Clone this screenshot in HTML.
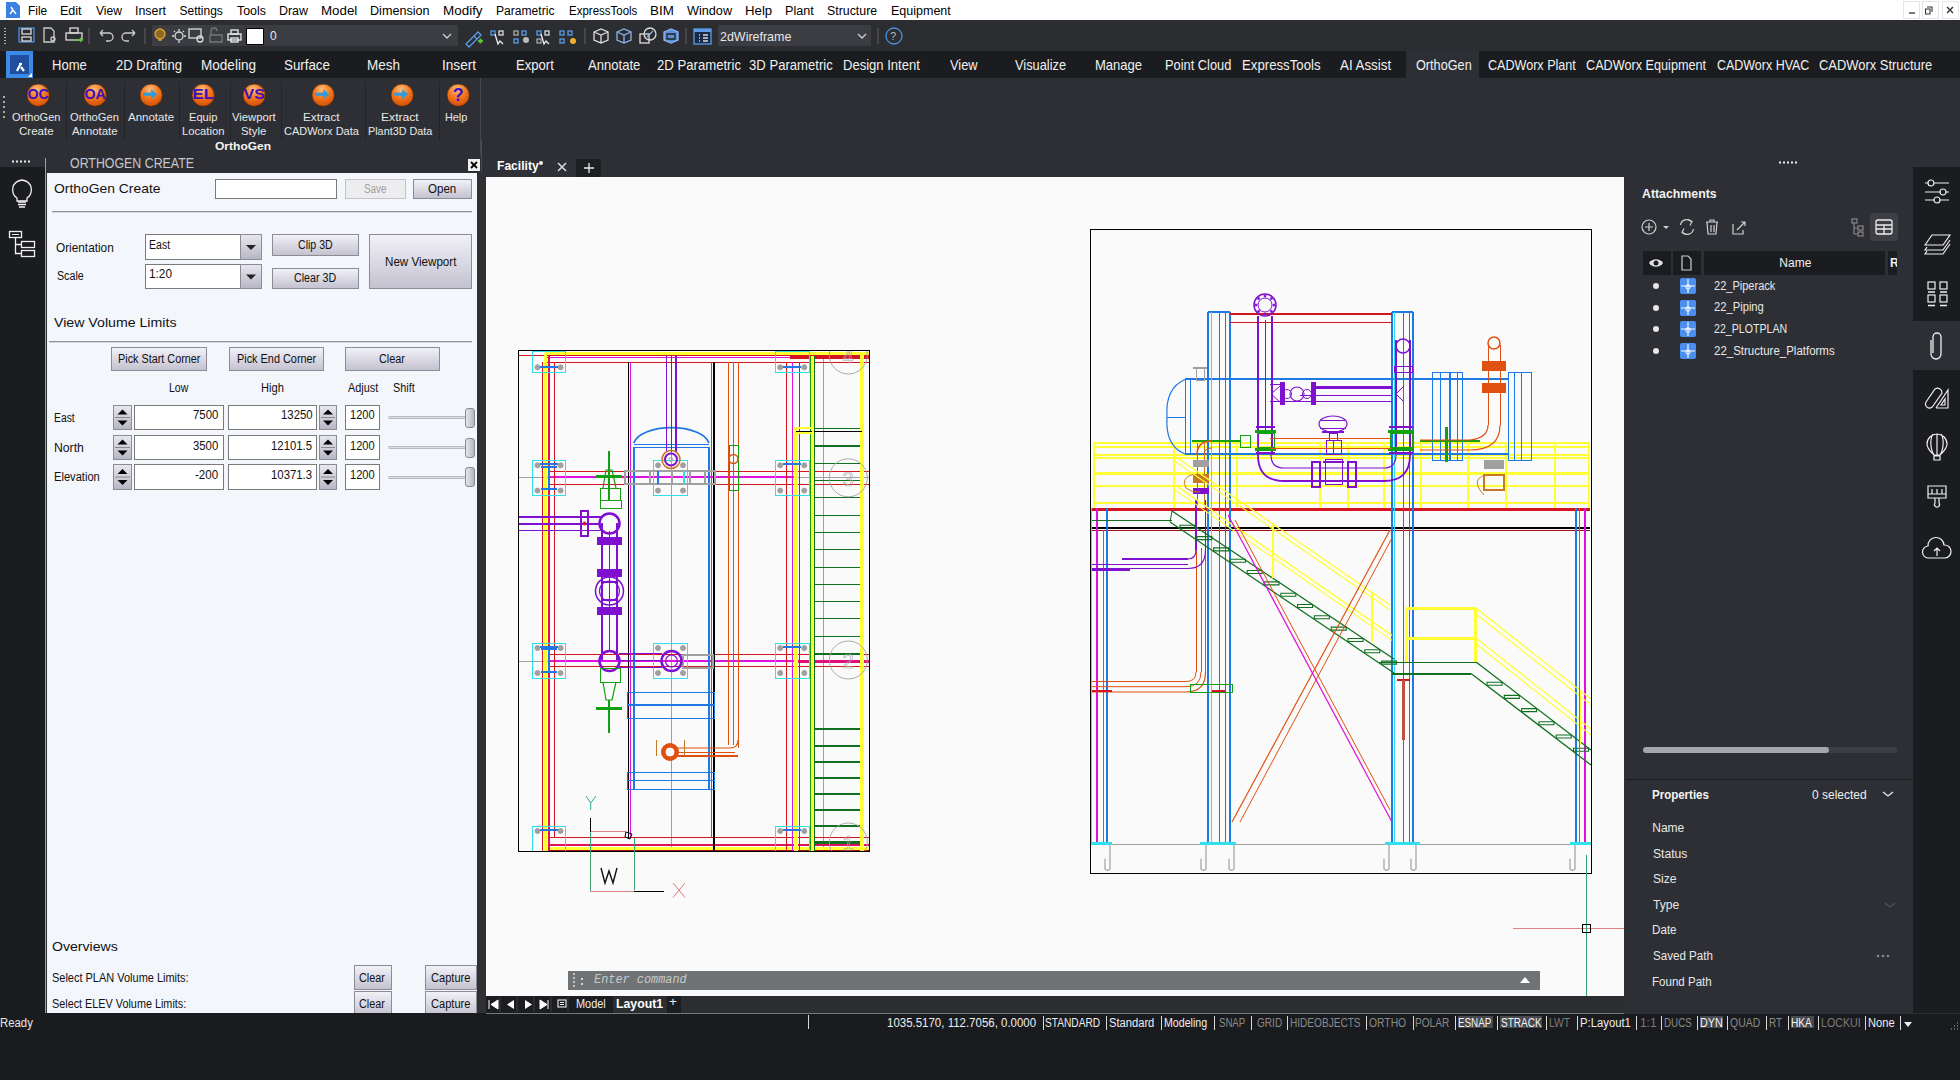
<!DOCTYPE html>
<html><head><meta charset="utf-8"><style>
html,body{margin:0;padding:0;width:1960px;height:1080px;overflow:hidden;background:#2d2f34;font-family:"Liberation Sans",sans-serif}
.b{position:absolute}
.t{position:absolute;white-space:nowrap;line-height:1.15}
.btn{position:absolute;box-sizing:border-box;border:1px solid #8c8c96;background:linear-gradient(#f2f1f8,#c4c2d0);text-align:center;font-family:"Liberation Sans",sans-serif;white-space:nowrap}
.btn.dis{background:#ededef;border-color:#c4c4c8}
.inp{position:absolute;box-sizing:border-box;border:1px solid #7a7a7a;background:#fff;font-size:12px;color:#111;white-space:nowrap}
.spin{position:absolute;box-sizing:border-box;border:1px solid #8c8c96;background:linear-gradient(#e8e7ef,#b8b6c4)}
.thumb{position:absolute;box-sizing:border-box;border:1px solid #8a8a92;border-radius:3px;background:linear-gradient(90deg,#e6e6ee,#b6b6c2)}
</style></head><body>
<div class="b" style="left:0px;top:0px;width:1960px;height:20px;background:#ffffff;"></div>
<div class="t" style="left:28.35px;top:4.84px;font-size:12px;line-height:1;color:#000;font-weight:normal;font-style:normal;transform:scaleX(0.9933);transform-origin:0 0;">File</div>
<div class="t" style="left:60.30px;top:4.84px;font-size:12px;line-height:1;color:#000;font-weight:normal;font-style:normal;transform:scaleX(1.0449);transform-origin:0 0;">Edit</div>
<div class="t" style="left:95.94px;top:4.84px;font-size:12px;line-height:1;color:#000;font-weight:normal;font-style:normal;transform:scaleX(1.0101);transform-origin:0 0;">View</div>
<div class="t" style="left:134.88px;top:4.84px;font-size:12px;line-height:1;color:#000;font-weight:normal;font-style:normal;transform:scaleX(1.0326);transform-origin:0 0;">Insert</div>
<div class="t" style="left:179.46px;top:4.84px;font-size:12px;line-height:1;color:#000;font-weight:normal;font-style:normal;">Settings</div>
<div class="t" style="left:237.25px;top:4.84px;font-size:12px;line-height:1;color:#000;font-weight:normal;font-style:normal;transform:scaleX(1.0344);transform-origin:0 0;">Tools</div>
<div class="t" style="left:279.01px;top:4.84px;font-size:12px;line-height:1;color:#000;font-weight:normal;font-style:normal;transform:scaleX(1.0347);transform-origin:0 0;">Draw</div>
<div class="t" style="left:321.43px;top:4.84px;font-size:12px;line-height:1;color:#000;font-weight:normal;font-style:normal;transform:scaleX(1.1100);transform-origin:0 0;">Model</div>
<div class="t" style="left:369.99px;top:4.84px;font-size:12px;line-height:1;color:#000;font-weight:normal;font-style:normal;transform:scaleX(1.0517);transform-origin:0 0;">Dimension</div>
<div class="t" style="left:443.42px;top:4.84px;font-size:12px;line-height:1;color:#000;font-weight:normal;font-style:normal;transform:scaleX(1.1198);transform-origin:0 0;">Modify</div>
<div class="t" style="left:496.33px;top:4.84px;font-size:12px;line-height:1;color:#000;font-weight:normal;font-style:normal;transform:scaleX(1.0078);transform-origin:0 0;">Parametric</div>
<div class="t" style="left:569.08px;top:4.84px;font-size:12px;line-height:1;color:#000;font-weight:normal;font-style:normal;transform:scaleX(0.9577);transform-origin:0 0;">ExpressTools</div>
<div class="t" style="left:650.33px;top:4.84px;font-size:12px;line-height:1;color:#000;font-weight:normal;font-style:normal;transform:scaleX(1.1146);transform-origin:0 0;">BIM</div>
<div class="t" style="left:686.94px;top:4.84px;font-size:12px;line-height:1;color:#000;font-weight:normal;font-style:normal;transform:scaleX(1.0549);transform-origin:0 0;">Window</div>
<div class="t" style="left:744.94px;top:4.84px;font-size:12px;line-height:1;color:#000;font-weight:normal;font-style:normal;transform:scaleX(1.1025);transform-origin:0 0;">Help</div>
<div class="t" style="left:784.99px;top:4.84px;font-size:12px;line-height:1;color:#000;font-weight:normal;font-style:normal;transform:scaleX(1.0540);transform-origin:0 0;">Plant</div>
<div class="t" style="left:827.44px;top:4.84px;font-size:12px;line-height:1;color:#000;font-weight:normal;font-style:normal;transform:scaleX(1.0298);transform-origin:0 0;">Structure</div>
<div class="t" style="left:891.00px;top:4.84px;font-size:12px;line-height:1;color:#000;font-weight:normal;font-style:normal;transform:scaleX(1.0419);transform-origin:0 0;">Equipment</div>
<svg class="b" style="left:6px;top:2px" width="14" height="16"><path d="M0 0h10l4 4v12H0z" fill="#3b82e0"/><path d="M5 5l2 3M7 8l-3 4M7 8l3 4" stroke="#fff" stroke-width="1.4" fill="none"/></svg>
<div class="b" style="left:1903px;top:1px;width:17px;height:18px;background:#ffffff;border:1px solid #e6e6e6;box-sizing:border-box"></div>
<div class="b" style="left:1922px;top:1px;width:17px;height:18px;background:#ffffff;border:1px solid #e6e6e6;box-sizing:border-box"></div>
<div class="b" style="left:1942px;top:1px;width:17px;height:18px;background:#ffffff;border:1px solid #e6e6e6;box-sizing:border-box"></div>
<svg class="b" style="left:1903px;top:1px" width="57" height="18"><path d="M6 12h6" stroke="#333" stroke-width="1.3"/><path d="M24 6h5v5M22.5 8h4.5v5h-4.5z" stroke="#333" fill="none" stroke-width="1.1"/><path d="M44 6l6 6M50 6l-6 6" stroke="#333" stroke-width="1.4"/></svg>
<div class="b" style="left:0px;top:20px;width:1960px;height:31px;background:#2b2d31;"></div>
<div class="b" style="left:152px;top:25px;width:306px;height:21px;background:#3b3d42;"></div>
<div class="b" style="left:718px;top:25px;width:153px;height:21px;background:#3b3d42;"></div>
<div class="t" style="left:270.22px;top:30.22px;font-size:12.5px;line-height:1;color:#e8e8e8;font-weight:normal;font-style:normal;transform:scaleX(0.9500);transform-origin:0 0;">0</div>
<div class="b" style="left:246px;top:28px;width:18px;height:17px;background:#ffffff;border:1px solid #000;box-sizing:border-box"></div>
<div class="t" style="left:720.38px;top:29.99px;font-size:13px;line-height:1;color:#e8e8e8;font-weight:normal;font-style:normal;transform:scaleX(0.9591);transform-origin:0 0;">2dWireframe</div>
<svg class="b" style="left:440px;top:30px" width="14" height="12"><path d="M3 4l4 4 4-4" stroke="#ccc" fill="none" stroke-width="1.3"/></svg>
<svg class="b" style="left:855px;top:30px" width="14" height="12"><path d="M3 4l4 4 4-4" stroke="#ccc" fill="none" stroke-width="1.3"/></svg>

<svg class="b" style="left:0;top:20px" width="960" height="31" fill="none" stroke-width="1.3">
 <path d="M5 8v1M5 11v1M5 14v1M5 17v1M5 20v1M5 23v1" stroke="#ddd" stroke-width="1.5"/>
 <rect x="19" y="8" width="15" height="14" stroke="#4d8fe0"/><rect x="22" y="9" width="9" height="5" stroke="#ddd"/><rect x="22" y="17" width="9" height="4" stroke="#ddd"/>
 <path d="M44 8h7l3 3v11H44z" stroke="#ccc"/><circle cx="53" cy="19" r="2" stroke="#ccc"/>
 <rect x="66" y="13" width="16" height="7" stroke="#ddd"/><rect x="70" y="8" width="8" height="5" stroke="#ddd"/><path d="M76 20h6M80 18l2 2-2 2" stroke="#5fbf3f"/>
 <path d="M89 8v16" stroke="#555"/>
 <path d="M100 13h9a4 4 0 0 1 0 8h-3M100 13l3-3M100 13l3 3" stroke="#ccc"/>
 <path d="M135 13h-9a4 4 0 0 0 0 8h3M135 13l-3-3M135 13l-3 3" stroke="#ccc"/>
 <path d="M145 8v16" stroke="#555"/>
 <circle cx="160" cy="14" r="5" stroke="#e2a532" fill="#8a6a20"/><path d="M158 20h4" stroke="#e2a532"/>
 <circle cx="179" cy="16" r="4" stroke="#ddd"/><path d="M179 9v2M179 21v2M172 16h2M184 16h2M174 11l1 1M184 11l-1 1" stroke="#ddd"/>
 <rect x="189" y="9" width="12" height="9" stroke="#ddd"/><circle cx="200" cy="19" r="3" stroke="#ddd"/>
 <path d="M211 14v-3a3 3 0 0 1 6 0M210 15h12v7h-12z" stroke="#777"/>
 <rect x="228" y="14" width="13" height="6" stroke="#eee"/><rect x="231" y="10" width="7" height="4" stroke="#eee"/><rect x="231" y="18" width="7" height="4" stroke="#eee"/>
 <path d="M466 24l8-8 3 3-8 8zM474 16l4-4 3 3-4 4" stroke="#5b9be8"/><path d="M478 21h5M480.5 18.5v5" stroke="#5fbf3f" stroke-width="2"/>
 <rect x="491" y="11" width="4" height="4" stroke="#5b9be8"/><rect x="499" y="11" width="4" height="4" stroke="#ddd"/><path d="M495 14l3 10 2-3 3 3" stroke="#eee"/>
 <rect x="514" y="11" width="4" height="4" stroke="#aaa"/><rect x="522" y="11" width="4" height="4" stroke="#5b9be8"/><rect x="514" y="19" width="4" height="4" stroke="#5b9be8"/><circle cx="526" cy="20" r="3" fill="#bbb"/>
 <rect x="537" y="11" width="4" height="4" stroke="#5b9be8"/><rect x="545" y="11" width="4" height="4" stroke="#ddd"/><rect x="537" y="19" width="4" height="4" stroke="#aaa"/><path d="M541 14l3 10 2-3 3 3" stroke="#eee"/>
 <rect x="560" y="11" width="4" height="4" stroke="#5b9be8"/><rect x="568" y="11" width="4" height="4" stroke="#5b9be8"/><rect x="560" y="19" width="4" height="4" stroke="#5b9be8"/><circle cx="573" cy="21" r="3" fill="#f0b030"/>
 <path d="M585 8v16" stroke="#555"/>
 <path d="M594 12l7-3 7 3v8l-7 3-7-3zM594 12l7 3 7-3M601 15v8" stroke="#ddd"/>
 <path d="M617 12l7-3 7 3v8l-7 3-7-3zM617 12l7 3 7-3M624 15v8" stroke="#8ab4f0"/>
 <circle cx="650" cy="14" r="6" stroke="#ddd"/><rect x="640" y="14" width="9" height="9" stroke="#ddd"/><path d="M647 17l6-6" stroke="#8ab4f0"/>
 <path d="M664 12l7-3 7 3v8l-7 3-7-3z" fill="#5b8fd8" stroke="#8ab4f0"/><path d="M667 14h8v5h-8z" stroke="#222"/>
 <path d="M686 8v16" stroke="#555"/>
 <rect x="694" y="9" width="17" height="15" stroke="#5b9be8" fill="#1a2a44"/><rect x="694" y="9" width="17" height="3" fill="#5b9be8"/><path d="M699 15h1M699 18h1M699 21h1M703 15h5M703 18h5M703 21h5" stroke="#ddd"/>
 <path d="M878 8v16" stroke="#555"/>
 <circle cx="894" cy="16" r="8" stroke="#4d8fe0"/><text x="890" y="20" font-size="11" fill="#bbb" stroke="none" font-family="Liberation Sans">?</text>
</svg>
<div class="b" style="left:0px;top:51px;width:1960px;height:27px;background:#1b1c1f;"></div>
<div class="b" style="left:1406px;top:51px;width:73px;height:27px;background:#2d2f34;"></div>
<div class="b" style="left:6px;top:51px;width:27px;height:27px;background:#3a8ae6;"></div>
<div class="b" style="left:10px;top:55px;width:19px;height:19px;background:#1f4f9e;"></div>
<svg class="b" style="left:6px;top:51px" width="27" height="27"><path d="M11 20l4-8M13 13l3 0M15 16l3 4" stroke="#fff" stroke-width="2.2" fill="none"/><path d="M22 26l4-4v4z" fill="#fff"/></svg>
<div class="t" style="left:52.45px;top:57.89px;font-size:14.3px;line-height:1;color:#f0f0f0;font-weight:normal;font-style:normal;transform:scaleX(0.9140);transform-origin:0 0;">Home</div>
<div class="t" style="left:115.65px;top:57.89px;font-size:14.3px;line-height:1;color:#f0f0f0;font-weight:normal;font-style:normal;transform:scaleX(0.9131);transform-origin:0 0;">2D Drafting</div>
<div class="t" style="left:200.92px;top:57.89px;font-size:14.3px;line-height:1;color:#f0f0f0;font-weight:normal;font-style:normal;transform:scaleX(0.9479);transform-origin:0 0;">Modeling</div>
<div class="t" style="left:283.70px;top:57.89px;font-size:14.3px;line-height:1;color:#f0f0f0;font-weight:normal;font-style:normal;transform:scaleX(0.9317);transform-origin:0 0;">Surface</div>
<div class="t" style="left:366.92px;top:57.89px;font-size:14.3px;line-height:1;color:#f0f0f0;font-weight:normal;font-style:normal;transform:scaleX(0.9425);transform-origin:0 0;">Mesh</div>
<div class="t" style="left:441.78px;top:57.89px;font-size:14.3px;line-height:1;color:#f0f0f0;font-weight:normal;font-style:normal;transform:scaleX(0.9508);transform-origin:0 0;">Insert</div>
<div class="t" style="left:516.25px;top:57.89px;font-size:14.3px;line-height:1;color:#f0f0f0;font-weight:normal;font-style:normal;transform:scaleX(0.9166);transform-origin:0 0;">Export</div>
<div class="t" style="left:588.00px;top:57.89px;font-size:14.3px;line-height:1;color:#f0f0f0;font-weight:normal;font-style:normal;transform:scaleX(0.9141);transform-origin:0 0;">Annotate</div>
<div class="t" style="left:656.64px;top:57.89px;font-size:14.3px;line-height:1;color:#f0f0f0;font-weight:normal;font-style:normal;transform:scaleX(0.9191);transform-origin:0 0;">2D Parametric</div>
<div class="t" style="left:749.48px;top:57.89px;font-size:14.3px;line-height:1;color:#f0f0f0;font-weight:normal;font-style:normal;transform:scaleX(0.9166);transform-origin:0 0;">3D Parametric</div>
<div class="t" style="left:843.26px;top:57.89px;font-size:14.3px;line-height:1;color:#f0f0f0;font-weight:normal;font-style:normal;transform:scaleX(0.9119);transform-origin:0 0;">Design Intent</div>
<div class="t" style="left:950.14px;top:57.89px;font-size:14.3px;line-height:1;color:#f0f0f0;font-weight:normal;font-style:normal;transform:scaleX(0.8998);transform-origin:0 0;">View</div>
<div class="t" style="left:1015.24px;top:57.89px;font-size:14.3px;line-height:1;color:#f0f0f0;font-weight:normal;font-style:normal;transform:scaleX(0.8975);transform-origin:0 0;">Visualize</div>
<div class="t" style="left:1094.96px;top:57.89px;font-size:14.3px;line-height:1;color:#f0f0f0;font-weight:normal;font-style:normal;transform:scaleX(0.9117);transform-origin:0 0;">Manage</div>
<div class="t" style="left:1165.27px;top:57.89px;font-size:14.3px;line-height:1;color:#f0f0f0;font-weight:normal;font-style:normal;transform:scaleX(0.8976);transform-origin:0 0;">Point Cloud</div>
<div class="t" style="left:1241.94px;top:57.89px;font-size:14.3px;line-height:1;color:#f0f0f0;font-weight:normal;font-style:normal;transform:scaleX(0.9236);transform-origin:0 0;">ExpressTools</div>
<div class="t" style="left:1340.00px;top:57.89px;font-size:14.3px;line-height:1;color:#f0f0f0;font-weight:normal;font-style:normal;transform:scaleX(0.9324);transform-origin:0 0;">AI Assist</div>
<div class="t" style="left:1415.73px;top:57.89px;font-size:14.3px;line-height:1;color:#f0f0f0;font-weight:normal;font-style:normal;transform:scaleX(0.8872);transform-origin:0 0;">OrthoGen</div>
<div class="t" style="left:1487.97px;top:57.89px;font-size:14.3px;line-height:1;color:#f0f0f0;font-weight:normal;font-style:normal;transform:scaleX(0.8796);transform-origin:0 0;">CADWorx Plant</div>
<div class="t" style="left:1585.67px;top:57.89px;font-size:14.3px;line-height:1;color:#f0f0f0;font-weight:normal;font-style:normal;transform:scaleX(0.8859);transform-origin:0 0;">CADWorx Equipment</div>
<div class="t" style="left:1717.08px;top:57.89px;font-size:14.3px;line-height:1;color:#f0f0f0;font-weight:normal;font-style:normal;transform:scaleX(0.8722);transform-origin:0 0;">CADWorx HVAC</div>
<div class="t" style="left:1818.75px;top:57.89px;font-size:14.3px;line-height:1;color:#f0f0f0;font-weight:normal;font-style:normal;transform:scaleX(0.9039);transform-origin:0 0;">CADWorx Structure</div>
<div class="b" style="left:0px;top:78px;width:1960px;height:99px;background:#2d2f34;"></div>
<div class="b" style="left:66px;top:82px;width:1px;height:58px;background:#232427;"></div>
<div class="b" style="left:124px;top:82px;width:1px;height:58px;background:#232427;"></div>
<div class="b" style="left:179px;top:82px;width:1px;height:58px;background:#232427;"></div>
<div class="b" style="left:230px;top:82px;width:1px;height:58px;background:#232427;"></div>
<div class="b" style="left:281px;top:82px;width:1px;height:58px;background:#232427;"></div>
<div class="b" style="left:365px;top:82px;width:1px;height:58px;background:#232427;"></div>
<div class="b" style="left:439px;top:82px;width:1px;height:58px;background:#232427;"></div>
<div class="b" style="left:480px;top:78px;width:1px;height:77px;background:#45474b;"></div>
<svg class="b" style="left:2px;top:96px" width="4" height="40"><path d="M2 0v2M2 5v2M2 10v2M2 15v2M2 20v2" stroke="#ddd" stroke-width="1.4"/></svg>
<svg class="b" style="left:25.8px;top:83.3px" width="24.4" height="24.4"><defs><radialGradient id="g38" cx="0.45" cy="0.25" r="0.8"><stop offset="0" stop-color="#fbc080"/><stop offset="0.45" stop-color="#f47a20"/><stop offset="1" stop-color="#d04800"/></radialGradient></defs><circle cx="12.2" cy="12.2" r="11.2" fill="url(#g38)" stroke="#3a2010" stroke-width="0.6"/><text x="12.2" y="16.2" text-anchor="middle" font-size="15" font-weight="bold" fill="#3a10c0" font-family="Liberation Sans" textLength="21.4" lengthAdjust="spacingAndGlyphs">OC</text></svg>
<div class="t" style="left:12.30px;top:111.48px;font-size:11.6px;line-height:1;color:#e8e8e8;font-weight:normal;font-style:normal;transform:scaleX(0.9507);transform-origin:0 0;">OrthoGen</div>
<div class="t" style="left:19.22px;top:125.18px;font-size:11.6px;line-height:1;color:#e8e8e8;font-weight:normal;font-style:normal;transform:scaleX(0.9941);transform-origin:0 0;">Create</div>
<svg class="b" style="left:82.8px;top:83.3px" width="24.4" height="24.4"><defs><radialGradient id="g95" cx="0.45" cy="0.25" r="0.8"><stop offset="0" stop-color="#fbc080"/><stop offset="0.45" stop-color="#f47a20"/><stop offset="1" stop-color="#d04800"/></radialGradient></defs><circle cx="12.2" cy="12.2" r="11.2" fill="url(#g95)" stroke="#3a2010" stroke-width="0.6"/><text x="12.2" y="16.2" text-anchor="middle" font-size="15" font-weight="bold" fill="#3a10c0" font-family="Liberation Sans" textLength="21.4" lengthAdjust="spacingAndGlyphs">OA</text></svg>
<div class="t" style="left:70.30px;top:111.48px;font-size:11.6px;line-height:1;color:#e8e8e8;font-weight:normal;font-style:normal;transform:scaleX(0.9587);transform-origin:0 0;">OrthoGen</div>
<div class="t" style="left:72.00px;top:125.18px;font-size:11.6px;line-height:1;color:#e8e8e8;font-weight:normal;font-style:normal;transform:scaleX(0.9809);transform-origin:0 0;">Annotate</div>
<svg class="b" style="left:138.8px;top:83.3px" width="24.4" height="24.4"><defs><radialGradient id="g151" cx="0.45" cy="0.25" r="0.8"><stop offset="0" stop-color="#fbc080"/><stop offset="0.45" stop-color="#f47a20"/><stop offset="1" stop-color="#d04800"/></radialGradient></defs><circle cx="12.2" cy="12.2" r="11.2" fill="url(#g151)" stroke="#3a2010" stroke-width="0.6"/><path d="M4.199999999999999 9.7h8v-3.5l6 5-6 5v-3.5h-8z" fill="#2f9ae0"/></svg>
<div class="t" style="left:128.00px;top:111.48px;font-size:11.6px;line-height:1;color:#e8e8e8;font-weight:normal;font-style:normal;transform:scaleX(0.9918);transform-origin:0 0;">Annotate</div>
<svg class="b" style="left:190.8px;top:83.3px" width="24.4" height="24.4"><defs><radialGradient id="g203" cx="0.45" cy="0.25" r="0.8"><stop offset="0" stop-color="#fbc080"/><stop offset="0.45" stop-color="#f47a20"/><stop offset="1" stop-color="#d04800"/></radialGradient></defs><circle cx="12.2" cy="12.2" r="11.2" fill="url(#g203)" stroke="#3a2010" stroke-width="0.6"/><text x="12.2" y="16.2" text-anchor="middle" font-size="15" font-weight="bold" fill="#3a10c0" font-family="Liberation Sans" textLength="21.4" lengthAdjust="spacingAndGlyphs">EL</text></svg>
<div class="t" style="left:188.51px;top:111.48px;font-size:11.6px;line-height:1;color:#e8e8e8;font-weight:normal;font-style:normal;transform:scaleX(0.9594);transform-origin:0 0;">Equip</div>
<div class="t" style="left:181.50px;top:125.18px;font-size:11.6px;line-height:1;color:#e8e8e8;font-weight:normal;font-style:normal;transform:scaleX(0.9676);transform-origin:0 0;">Location</div>
<svg class="b" style="left:241.8px;top:83.3px" width="24.4" height="24.4"><defs><radialGradient id="g254" cx="0.45" cy="0.25" r="0.8"><stop offset="0" stop-color="#fbc080"/><stop offset="0.45" stop-color="#f47a20"/><stop offset="1" stop-color="#d04800"/></radialGradient></defs><circle cx="12.2" cy="12.2" r="11.2" fill="url(#g254)" stroke="#3a2010" stroke-width="0.6"/><text x="12.2" y="16.2" text-anchor="middle" font-size="15" font-weight="bold" fill="#3a10c0" font-family="Liberation Sans" textLength="21.4" lengthAdjust="spacingAndGlyphs">VS</text></svg>
<div class="t" style="left:232.34px;top:111.48px;font-size:11.6px;line-height:1;color:#e8e8e8;font-weight:normal;font-style:normal;transform:scaleX(0.9693);transform-origin:0 0;">Viewport</div>
<div class="t" style="left:241.29px;top:125.18px;font-size:11.6px;line-height:1;color:#e8e8e8;font-weight:normal;font-style:normal;transform:scaleX(0.9794);transform-origin:0 0;">Style</div>
<svg class="b" style="left:310.8px;top:83.3px" width="24.4" height="24.4"><defs><radialGradient id="g323" cx="0.45" cy="0.25" r="0.8"><stop offset="0" stop-color="#fbc080"/><stop offset="0.45" stop-color="#f47a20"/><stop offset="1" stop-color="#d04800"/></radialGradient></defs><circle cx="12.2" cy="12.2" r="11.2" fill="url(#g323)" stroke="#3a2010" stroke-width="0.6"/><path d="M4.199999999999999 9.7h8v-3.5l6 5-6 5v-3.5h-8z" fill="#2f9ae0"/></svg>
<div class="t" style="left:303.36px;top:111.48px;font-size:11.6px;line-height:1;color:#e8e8e8;font-weight:normal;font-style:normal;transform:scaleX(1.0117);transform-origin:0 0;">Extract</div>
<div class="t" style="left:284.15px;top:125.18px;font-size:11.6px;line-height:1;color:#e8e8e8;font-weight:normal;font-style:normal;transform:scaleX(0.9468);transform-origin:0 0;">CADWorx Data</div>
<svg class="b" style="left:389.8px;top:83.3px" width="24.4" height="24.4"><defs><radialGradient id="g402" cx="0.45" cy="0.25" r="0.8"><stop offset="0" stop-color="#fbc080"/><stop offset="0.45" stop-color="#f47a20"/><stop offset="1" stop-color="#d04800"/></radialGradient></defs><circle cx="12.2" cy="12.2" r="11.2" fill="url(#g402)" stroke="#3a2010" stroke-width="0.6"/><path d="M4.199999999999999 9.7h8v-3.5l6 5-6 5v-3.5h-8z" fill="#2f9ae0"/></svg>
<div class="t" style="left:381.33px;top:111.48px;font-size:11.6px;line-height:1;color:#e8e8e8;font-weight:normal;font-style:normal;transform:scaleX(1.0459);transform-origin:0 0;">Extract</div>
<div class="t" style="left:367.63px;top:125.18px;font-size:11.6px;line-height:1;color:#e8e8e8;font-weight:normal;font-style:normal;transform:scaleX(0.9334);transform-origin:0 0;">Plant3D Data</div>
<svg class="b" style="left:445.8px;top:83.3px" width="24.4" height="24.4"><defs><radialGradient id="g458" cx="0.45" cy="0.25" r="0.8"><stop offset="0" stop-color="#fbc080"/><stop offset="0.45" stop-color="#f47a20"/><stop offset="1" stop-color="#d04800"/></radialGradient></defs><circle cx="12.2" cy="12.2" r="11.2" fill="url(#g458)" stroke="#3a2010" stroke-width="0.6"/><text x="12.2" y="18.2" text-anchor="middle" font-size="18" font-weight="bold" fill="#3a10c0" font-family="Liberation Sans">?</text></svg>
<div class="t" style="left:445.33px;top:111.48px;font-size:11.6px;line-height:1;color:#e8e8e8;font-weight:normal;font-style:normal;transform:scaleX(0.9356);transform-origin:0 0;">Help</div>
<div class="t" style="left:215.32px;top:141.43px;font-size:11.3px;line-height:1;color:#f4f4f4;font-weight:bold;font-style:normal;transform:scaleX(1.0643);transform-origin:0 0;">OrthoGen</div>
<div class="b" style="left:0px;top:155px;width:480px;height:22px;background:#2d2f34;"></div>
<svg class="b" style="left:12px;top:160px" width="20" height="4"><path d="M0 1.5h2M4 1.5h2M8 1.5h2M12 1.5h2M16 1.5h2" stroke="#eee" stroke-width="2"/></svg>
<div class="b" style="left:45px;top:158px;width:1px;height:855px;background:#9c9ea2;"></div>
<div class="t" style="left:70.34px;top:157.32px;font-size:13.8px;line-height:1;color:#c4c8cc;font-weight:normal;font-style:normal;transform:scaleX(0.8971);transform-origin:0 0;">ORTHOGEN CREATE</div>
<div class="b" style="left:468px;top:159px;width:12px;height:12px;background:#f0f0f0;"></div>
<svg class="b" style="left:468px;top:159px" width="12" height="12"><path d="M3 3l6 6M9 3l-6 6" stroke="#000" stroke-width="1.8"/></svg>
<div class="b" style="left:481px;top:140px;width:1px;height:32px;background:#4a4c50;"></div>
<div class="b" style="left:487px;top:159px;width:88px;height:18px;background:#2f3136;"></div>
<div class="t" style="left:496.81px;top:160.42px;font-size:12.5px;line-height:1;color:#ffffff;font-weight:bold;font-style:normal;transform:scaleX(0.9671);transform-origin:0 0;">Facility</div>
<svg class="b" style="left:538px;top:160px" width="6" height="6"><circle cx="3" cy="3" r="2" fill="#eee"/></svg>
<svg class="b" style="left:556px;top:161px" width="12" height="12"><path d="M2 2l8 8M10 2l-8 8" stroke="#ddd" stroke-width="1.5"/></svg>
<div class="b" style="left:576px;top:159px;width:25px;height:18px;background:#1e1f22;"></div>
<svg class="b" style="left:582px;top:161px" width="14" height="14"><path d="M7 2v10M2 7h10" stroke="#eee" stroke-width="1.3"/></svg>
<div class="b" style="left:0px;top:167px;width:45px;height:846px;background:#1b1c1f;"></div>
<svg class="b" style="left:0px;top:170px" width="45" height="100" fill="none" stroke="#f0f0f0" stroke-width="1.3"><path d="M17 28c-6-4-7-16 5-18 12 2 11 14 5 18v3h-10z"/><path d="M18 32h8M18 34.5h8M19 37h6"/><rect x="9.5" y="61.5" width="12" height="6"/><rect x="21.5" y="71.5" width="13" height="6"/><rect x="21.5" y="80.5" width="13" height="6"/><path d="M15.5 67.5v16h6M15.5 74.5h6"/><path d="M12 64.5h7" stroke-width="1"/></svg>
<div class="b" style="left:47px;top:173px;width:430px;height:840px;background:#f3f6fb;"></div>
<div class="b" style="left:477px;top:173px;width:9px;height:840px;background:#2e3034;"></div>
<div class="t" style="left:53.77px;top:183.16px;font-size:12.8px;line-height:1;color:#111;font-weight:normal;font-style:normal;transform:scaleX(1.0853);transform-origin:0 0;">OrthoGen Create</div>
<div class="inp" style="left:215px;top:179px;width:122px;height:20px"></div>
<div class="btn dis" style="left:345px;top:179px;width:61px;height:20px"></div>
<div class="t" style="left:363.55px;top:182.84px;font-size:12px;line-height:1;color:#a0a0a0;font-weight:normal;font-style:normal;transform:scaleX(0.8257);transform-origin:0 0;">Save</div>
<div class="btn" style="left:413px;top:179px;width:59px;height:20px"></div>
<div class="t" style="left:428.48px;top:182.84px;font-size:12px;line-height:1;color:#111;font-weight:normal;font-style:normal;transform:scaleX(0.9636);transform-origin:0 0;">Open</div>
<div class="b" style="left:52px;top:211px;width:420px;height:1px;background:#8e9298;"></div>
<div class="b" style="left:52px;top:212px;width:420px;height:1px;background:#d6d9de;"></div>
<div class="t" style="left:56.47px;top:241.64px;font-size:12px;line-height:1;color:#111;font-weight:normal;font-style:normal;transform:scaleX(0.9833);transform-origin:0 0;">Orientation</div>
<div class="t" style="left:56.52px;top:269.54px;font-size:12px;line-height:1;color:#111;font-weight:normal;font-style:normal;transform:scaleX(0.8887);transform-origin:0 0;">Scale</div>
<div class="inp" style="left:145px;top:234px;width:117px;height:26px"></div>
<div class="spin" style="left:240px;top:234px;width:22px;height:26px"></div>
<svg class="b" style="left:240px;top:234px" width="22" height="26"><path d="M6 11.0h10l-5 5z" fill="#222"/></svg>
<div class="t" style="left:149.16px;top:238.64px;font-size:12px;line-height:1;color:#111;font-weight:normal;font-style:normal;transform:scaleX(0.8790);transform-origin:0 0;">East</div>
<div class="inp" style="left:145px;top:264px;width:117px;height:25px"></div>
<div class="spin" style="left:240px;top:264px;width:22px;height:25px"></div>
<svg class="b" style="left:240px;top:264px" width="22" height="25"><path d="M6 10.5h10l-5 5z" fill="#222"/></svg>
<div class="t" style="left:149.11px;top:267.54px;font-size:12px;line-height:1;color:#111;font-weight:normal;font-style:normal;transform:scaleX(0.9855);transform-origin:0 0;">1:20</div>
<div class="btn" style="left:272px;top:234px;width:87px;height:22px"></div>
<div class="t" style="left:298.17px;top:238.64px;font-size:12px;line-height:1;color:#111;font-weight:normal;font-style:normal;transform:scaleX(0.8831);transform-origin:0 0;">Clip 3D</div>
<div class="btn" style="left:272px;top:268px;width:87px;height:21px"></div>
<div class="t" style="left:294.37px;top:271.84px;font-size:12px;line-height:1;color:#111;font-weight:normal;font-style:normal;transform:scaleX(0.8896);transform-origin:0 0;">Clear 3D</div>
<div class="btn" style="left:369px;top:234px;width:103px;height:55px"></div>
<div class="t" style="left:384.87px;top:255.54px;font-size:12px;line-height:1;color:#111;font-weight:normal;font-style:normal;transform:scaleX(0.9673);transform-origin:0 0;">New Viewport</div>
<div class="t" style="left:54.23px;top:316.96px;font-size:12.8px;line-height:1;color:#111;font-weight:normal;font-style:normal;transform:scaleX(1.1061);transform-origin:0 0;">View Volume Limits</div>
<div class="b" style="left:49px;top:341px;width:423px;height:1px;background:#8e9298;"></div>
<div class="b" style="left:49px;top:342px;width:423px;height:1px;background:#d6d9de;"></div>
<div class="btn" style="left:111px;top:347px;width:96px;height:24px"></div>
<div class="t" style="left:117.73px;top:352.84px;font-size:12px;line-height:1;color:#111;font-weight:normal;font-style:normal;transform:scaleX(0.9026);transform-origin:0 0;">Pick Start Corner</div>
<div class="btn" style="left:229px;top:347px;width:95px;height:24px"></div>
<div class="t" style="left:236.93px;top:352.84px;font-size:12px;line-height:1;color:#111;font-weight:normal;font-style:normal;transform:scaleX(0.9070);transform-origin:0 0;">Pick End Corner</div>
<div class="btn" style="left:345px;top:347px;width:95px;height:24px"></div>
<div class="t" style="left:379.16px;top:352.84px;font-size:12px;line-height:1;color:#111;font-weight:normal;font-style:normal;transform:scaleX(0.9052);transform-origin:0 0;">Clear</div>
<div class="t" style="left:168.86px;top:382.44px;font-size:12px;line-height:1;color:#111;font-weight:normal;font-style:normal;transform:scaleX(0.8784);transform-origin:0 0;">Low</div>
<div class="t" style="left:260.91px;top:382.44px;font-size:12px;line-height:1;color:#111;font-weight:normal;font-style:normal;transform:scaleX(0.9250);transform-origin:0 0;">High</div>
<div class="t" style="left:347.70px;top:382.44px;font-size:12px;line-height:1;color:#111;font-weight:normal;font-style:normal;transform:scaleX(0.9055);transform-origin:0 0;">Adjust</div>
<div class="t" style="left:392.81px;top:382.44px;font-size:12px;line-height:1;color:#111;font-weight:normal;font-style:normal;transform:scaleX(0.9017);transform-origin:0 0;">Shift</div>
<div class="t" style="left:54.07px;top:411.84px;font-size:12px;line-height:1;color:#111;font-weight:normal;font-style:normal;transform:scaleX(0.8616);transform-origin:0 0;">East</div>
<div class="spin" style="left:113px;top:405px;width:19px;height:25px"></div><svg class="b" style="left:113px;top:405px" width="19" height="25"><path d="M4.5 9.5l5-5 5 5z" fill="#000"/><path d="M4.5 15.5l5 5 5-5z" fill="#000"/><path d="M2 12.5h15" stroke="#888"/></svg>
<div class="inp" style="left:134px;top:405px;width:90px;height:25px"></div>
<div class="t" style="left:193.23px;top:409.44px;font-size:12px;line-height:1;color:#111;font-weight:normal;font-style:normal;transform:scaleX(0.9502);transform-origin:0 0;">7500</div>
<div class="inp" style="left:228px;top:405px;width:89px;height:25px"></div>
<div class="t" style="left:280.65px;top:409.44px;font-size:12px;line-height:1;color:#111;font-weight:normal;font-style:normal;transform:scaleX(0.9488);transform-origin:0 0;">13250</div>
<div class="spin" style="left:319px;top:405px;width:18px;height:25px"></div><svg class="b" style="left:319px;top:405px" width="18" height="25"><path d="M4.0 9.5l5-5 5 5z" fill="#000"/><path d="M4.0 15.5l5 5 5-5z" fill="#000"/><path d="M2 12.5h14" stroke="#888"/></svg>
<div class="inp" style="left:345px;top:405px;width:35px;height:25px"></div>
<div class="t" style="left:350.27px;top:409.44px;font-size:12px;line-height:1;color:#111;font-weight:normal;font-style:normal;transform:scaleX(0.9220);transform-origin:0 0;">1200</div>
<div class="b" style="left:388px;top:416.0px;width:80px;height:3px;background:#dcdee2;border-radius:2px;border:1px solid #b8bac0;box-sizing:border-box"></div>
<div class="thumb" style="left:465px;top:408px;width:10px;height:20px"></div>
<div class="t" style="left:53.92px;top:441.84px;font-size:12px;line-height:1;color:#111;font-weight:normal;font-style:normal;transform:scaleX(1.0181);transform-origin:0 0;">North</div>
<div class="spin" style="left:113px;top:435px;width:19px;height:25px"></div><svg class="b" style="left:113px;top:435px" width="19" height="25"><path d="M4.5 9.5l5-5 5 5z" fill="#000"/><path d="M4.5 15.5l5 5 5-5z" fill="#000"/><path d="M2 12.5h15" stroke="#888"/></svg>
<div class="inp" style="left:134px;top:435px;width:90px;height:25px"></div>
<div class="t" style="left:193.35px;top:439.64px;font-size:12px;line-height:1;color:#111;font-weight:normal;font-style:normal;transform:scaleX(0.9457);transform-origin:0 0;">3500</div>
<div class="inp" style="left:228px;top:435px;width:89px;height:25px"></div>
<div class="t" style="left:271.25px;top:439.64px;font-size:12px;line-height:1;color:#111;font-weight:normal;font-style:normal;transform:scaleX(0.9476);transform-origin:0 0;">12101.5</div>
<div class="spin" style="left:319px;top:435px;width:18px;height:25px"></div><svg class="b" style="left:319px;top:435px" width="18" height="25"><path d="M4.0 9.5l5-5 5 5z" fill="#000"/><path d="M4.0 15.5l5 5 5-5z" fill="#000"/><path d="M2 12.5h14" stroke="#888"/></svg>
<div class="inp" style="left:345px;top:435px;width:35px;height:25px"></div>
<div class="t" style="left:350.27px;top:439.64px;font-size:12px;line-height:1;color:#111;font-weight:normal;font-style:normal;transform:scaleX(0.9220);transform-origin:0 0;">1200</div>
<div class="b" style="left:388px;top:446.0px;width:80px;height:3px;background:#dcdee2;border-radius:2px;border:1px solid #b8bac0;box-sizing:border-box"></div>
<div class="thumb" style="left:465px;top:438px;width:10px;height:20px"></div>
<div class="t" style="left:54.01px;top:471.34px;font-size:12px;line-height:1;color:#111;font-weight:normal;font-style:normal;transform:scaleX(0.9278);transform-origin:0 0;">Elevation</div>
<div class="spin" style="left:113px;top:464px;width:19px;height:26px"></div><svg class="b" style="left:113px;top:464px" width="19" height="26"><path d="M4.5 10.0l5-5 5 5z" fill="#000"/><path d="M4.5 16.0l5 5 5-5z" fill="#000"/><path d="M2 13.0h15" stroke="#888"/></svg>
<div class="inp" style="left:134px;top:464px;width:90px;height:26px"></div>
<div class="t" style="left:195.48px;top:468.84px;font-size:12px;line-height:1;color:#111;font-weight:normal;font-style:normal;transform:scaleX(0.9635);transform-origin:0 0;">-200</div>
<div class="inp" style="left:228px;top:464px;width:89px;height:26px"></div>
<div class="t" style="left:271.25px;top:468.84px;font-size:12px;line-height:1;color:#111;font-weight:normal;font-style:normal;transform:scaleX(0.9476);transform-origin:0 0;">10371.3</div>
<div class="spin" style="left:319px;top:464px;width:18px;height:26px"></div><svg class="b" style="left:319px;top:464px" width="18" height="26"><path d="M4.0 10.0l5-5 5 5z" fill="#000"/><path d="M4.0 16.0l5 5 5-5z" fill="#000"/><path d="M2 13.0h14" stroke="#888"/></svg>
<div class="inp" style="left:345px;top:464px;width:35px;height:26px"></div>
<div class="t" style="left:350.27px;top:468.84px;font-size:12px;line-height:1;color:#111;font-weight:normal;font-style:normal;transform:scaleX(0.9220);transform-origin:0 0;">1200</div>
<div class="b" style="left:388px;top:475.5px;width:80px;height:3px;background:#dcdee2;border-radius:2px;border:1px solid #b8bac0;box-sizing:border-box"></div>
<div class="thumb" style="left:465px;top:467px;width:10px;height:20px"></div>
<div class="t" style="left:51.77px;top:940.66px;font-size:12.8px;line-height:1;color:#111;font-weight:normal;font-style:normal;transform:scaleX(1.1012);transform-origin:0 0;">Overviews</div>
<div class="t" style="left:51.51px;top:972.24px;font-size:12px;line-height:1;color:#111;font-weight:normal;font-style:normal;transform:scaleX(0.9146);transform-origin:0 0;">Select PLAN Volume Limits:</div>
<div class="t" style="left:51.51px;top:997.64px;font-size:12px;line-height:1;color:#111;font-weight:normal;font-style:normal;transform:scaleX(0.9024);transform-origin:0 0;">Select ELEV Volume Limits:</div>
<div class="btn" style="left:354px;top:965px;width:38px;height:25px"></div>
<div class="t" style="left:358.96px;top:972.24px;font-size:12px;line-height:1;color:#111;font-weight:normal;font-style:normal;transform:scaleX(0.8980);transform-origin:0 0;">Clear</div>
<div class="btn" style="left:425px;top:965px;width:52px;height:25px"></div>
<div class="t" style="left:431.45px;top:972.24px;font-size:12px;line-height:1;color:#111;font-weight:normal;font-style:normal;transform:scaleX(0.9224);transform-origin:0 0;">Capture</div>
<div class="btn" style="left:354px;top:991px;width:38px;height:25px"></div>
<div class="t" style="left:358.96px;top:997.64px;font-size:12px;line-height:1;color:#111;font-weight:normal;font-style:normal;transform:scaleX(0.8980);transform-origin:0 0;">Clear</div>
<div class="btn" style="left:425px;top:991px;width:52px;height:25px"></div>
<div class="t" style="left:431.45px;top:997.64px;font-size:12px;line-height:1;color:#111;font-weight:normal;font-style:normal;transform:scaleX(0.9224);transform-origin:0 0;">Capture</div>
<div class="b" style="left:486px;top:177px;width:1138px;height:819px;background:#fafafa;"></div>
<svg class="b" style="left:0;top:0" width="1960" height="1080"><line x1="518" y1="477.5" x2="870" y2="477.5" stroke="#a0a0a0" stroke-width="1" shape-rendering="crispEdges"/><line x1="518" y1="661.5" x2="870" y2="661.5" stroke="#a0a0a0" stroke-width="1" shape-rendering="crispEdges"/><line x1="671.5" y1="447" x2="671.5" y2="851" stroke="#a0a0a0" stroke-width="1" shape-rendering="crispEdges"/><line x1="823.5" y1="356" x2="823.5" y2="851" stroke="#a0a0a0" stroke-width="1" shape-rendering="crispEdges"/><line x1="545" y1="353.5" x2="869" y2="353.5" stroke="#ffff33" stroke-width="3" shape-rendering="crispEdges"/><line x1="518" y1="355.5" x2="869" y2="355.5" stroke="#d4141e" stroke-width="1" shape-rendering="crispEdges"/><line x1="545" y1="357.5" x2="869" y2="357.5" stroke="#e010e0" stroke-width="1" shape-rendering="crispEdges"/><line x1="545" y1="362.5" x2="869" y2="362.5" stroke="#d4141e" stroke-width="1" shape-rendering="crispEdges"/><line x1="790" y1="357.5" x2="869" y2="357.5" stroke="#d4141e" stroke-width="3" shape-rendering="crispEdges"/><line x1="549" y1="837.5" x2="869" y2="837.5" stroke="#d4141e" stroke-width="1" shape-rendering="crispEdges"/><line x1="545" y1="848.5" x2="869" y2="848.5" stroke="#ffff33" stroke-width="3" shape-rendering="crispEdges"/><line x1="549" y1="845" x2="869" y2="845" stroke="#e01060" stroke-width="2" shape-rendering="crispEdges"/><line x1="549" y1="851" x2="869" y2="851" stroke="#a0101a" stroke-width="2" shape-rendering="crispEdges"/><line x1="548" y1="471.5" x2="869" y2="471.5" stroke="#d4141e" stroke-width="1" shape-rendering="crispEdges"/><line x1="548" y1="484.5" x2="869" y2="484.5" stroke="#d4141e" stroke-width="1" shape-rendering="crispEdges"/><line x1="548" y1="477" x2="795" y2="477" stroke="#e010e0" stroke-width="2" shape-rendering="crispEdges"/><line x1="548" y1="654.5" x2="869" y2="654.5" stroke="#d4141e" stroke-width="1" shape-rendering="crispEdges"/><line x1="548" y1="666.5" x2="869" y2="666.5" stroke="#d4141e" stroke-width="1" shape-rendering="crispEdges"/><line x1="548" y1="661" x2="869" y2="661" stroke="#e010e0" stroke-width="2" shape-rendering="crispEdges"/><line x1="795" y1="661.5" x2="869" y2="661.5" stroke="#e0107a" stroke-width="3" shape-rendering="crispEdges"/><line x1="542.5" y1="362" x2="542.5" y2="851" stroke="#d4141e" stroke-width="1" shape-rendering="crispEdges"/><line x1="545.5" y1="353" x2="545.5" y2="851" stroke="#ffff33" stroke-width="3" shape-rendering="crispEdges"/><line x1="549" y1="356" x2="549" y2="851" stroke="#e01060" stroke-width="2" shape-rendering="crispEdges"/><line x1="554.5" y1="362" x2="554.5" y2="838" stroke="#d4141e" stroke-width="1" shape-rendering="crispEdges"/><line x1="786.5" y1="362" x2="786.5" y2="851" stroke="#d4141e" stroke-width="1" shape-rendering="crispEdges"/><line x1="792.5" y1="362" x2="792.5" y2="851" stroke="#e010e0" stroke-width="1" shape-rendering="crispEdges"/><line x1="799.5" y1="362" x2="799.5" y2="851" stroke="#d4141e" stroke-width="1" shape-rendering="crispEdges"/><line x1="796" y1="429" x2="796" y2="851" stroke="#ffff33" stroke-width="4" shape-rendering="crispEdges"/><rect x="532.5" y="351.5" width="33.0" height="21.0" stroke="#30e0f0" stroke-width="1" fill="none" shape-rendering="crispEdges"/><circle cx="537.5" cy="367.3" r="2.5" stroke="#a0a0a0" stroke-width="1" fill="#a0a0a0"/><circle cx="560.6" cy="367.3" r="2.5" stroke="#a0a0a0" stroke-width="1" fill="#a0a0a0"/><line x1="540" y1="367" x2="558" y2="367" stroke="#1e78e6" stroke-width="2" shape-rendering="crispEdges"/><rect x="532.5" y="460.5" width="33.0" height="35.0" stroke="#30e0f0" stroke-width="1" fill="none" shape-rendering="crispEdges"/><circle cx="537.5" cy="465.3" r="2.5" stroke="#a0a0a0" stroke-width="1" fill="#a0a0a0"/><circle cx="537.5" cy="490.6" r="2.5" stroke="#a0a0a0" stroke-width="1" fill="#a0a0a0"/><circle cx="560.6" cy="465.3" r="2.5" stroke="#a0a0a0" stroke-width="1" fill="#a0a0a0"/><circle cx="560.6" cy="490.6" r="2.5" stroke="#a0a0a0" stroke-width="1" fill="#a0a0a0"/><line x1="540" y1="464" x2="558" y2="464" stroke="#1e78e6" stroke-width="2" shape-rendering="crispEdges"/><rect x="532.5" y="643.5" width="33.0" height="35.0" stroke="#30e0f0" stroke-width="1" fill="none" shape-rendering="crispEdges"/><circle cx="537.5" cy="648" r="2.5" stroke="#a0a0a0" stroke-width="1" fill="#a0a0a0"/><circle cx="537.5" cy="673" r="2.5" stroke="#a0a0a0" stroke-width="1" fill="#a0a0a0"/><circle cx="560.6" cy="648" r="2.5" stroke="#a0a0a0" stroke-width="1" fill="#a0a0a0"/><circle cx="560.6" cy="673" r="2.5" stroke="#a0a0a0" stroke-width="1" fill="#a0a0a0"/><line x1="540" y1="647" x2="558" y2="647" stroke="#1e78e6" stroke-width="2" shape-rendering="crispEdges"/><rect x="532.5" y="826.5" width="33.0" height="25.0" stroke="#30e0f0" stroke-width="1" fill="none" shape-rendering="crispEdges"/><circle cx="537.5" cy="831" r="2.5" stroke="#a0a0a0" stroke-width="1" fill="#a0a0a0"/><circle cx="560.6" cy="831" r="2.5" stroke="#a0a0a0" stroke-width="1" fill="#a0a0a0"/><line x1="540" y1="830" x2="558" y2="830" stroke="#1e78e6" stroke-width="2" shape-rendering="crispEdges"/><rect x="775.5" y="351.5" width="34.0" height="21.0" stroke="#30e0f0" stroke-width="1" fill="none" shape-rendering="crispEdges"/><circle cx="780.2" cy="367.3" r="2.5" stroke="#a0a0a0" stroke-width="1" fill="#a0a0a0"/><circle cx="804.3" cy="367.3" r="2.5" stroke="#a0a0a0" stroke-width="1" fill="#a0a0a0"/><line x1="783" y1="367" x2="801" y2="367" stroke="#1e78e6" stroke-width="2" shape-rendering="crispEdges"/><rect x="775.5" y="460.5" width="34.0" height="35.0" stroke="#30e0f0" stroke-width="1" fill="none" shape-rendering="crispEdges"/><circle cx="780.2" cy="465.3" r="2.5" stroke="#a0a0a0" stroke-width="1" fill="#a0a0a0"/><circle cx="780.2" cy="490.6" r="2.5" stroke="#a0a0a0" stroke-width="1" fill="#a0a0a0"/><circle cx="804.3" cy="465.3" r="2.5" stroke="#a0a0a0" stroke-width="1" fill="#a0a0a0"/><circle cx="804.3" cy="490.6" r="2.5" stroke="#a0a0a0" stroke-width="1" fill="#a0a0a0"/><line x1="783" y1="464" x2="801" y2="464" stroke="#1e78e6" stroke-width="2" shape-rendering="crispEdges"/><rect x="775.5" y="643.5" width="34.0" height="35.0" stroke="#30e0f0" stroke-width="1" fill="none" shape-rendering="crispEdges"/><circle cx="780.2" cy="648" r="2.5" stroke="#a0a0a0" stroke-width="1" fill="#a0a0a0"/><circle cx="780.2" cy="673" r="2.5" stroke="#a0a0a0" stroke-width="1" fill="#a0a0a0"/><circle cx="804.3" cy="648" r="2.5" stroke="#a0a0a0" stroke-width="1" fill="#a0a0a0"/><circle cx="804.3" cy="673" r="2.5" stroke="#a0a0a0" stroke-width="1" fill="#a0a0a0"/><line x1="783" y1="647" x2="801" y2="647" stroke="#1e78e6" stroke-width="2" shape-rendering="crispEdges"/><rect x="775.5" y="826.5" width="34.0" height="25.0" stroke="#30e0f0" stroke-width="1" fill="none" shape-rendering="crispEdges"/><circle cx="780.2" cy="831" r="2.5" stroke="#a0a0a0" stroke-width="1" fill="#a0a0a0"/><circle cx="804.3" cy="831" r="2.5" stroke="#a0a0a0" stroke-width="1" fill="#a0a0a0"/><line x1="783" y1="830" x2="801" y2="830" stroke="#1e78e6" stroke-width="2" shape-rendering="crispEdges"/><rect x="653.5" y="460.5" width="34.0" height="35.0" stroke="#30e0f0" stroke-width="1" fill="none" shape-rendering="crispEdges"/><circle cx="658" cy="465.3" r="2.5" stroke="#a0a0a0" stroke-width="1" fill="#a0a0a0"/><circle cx="658" cy="490.6" r="2.5" stroke="#a0a0a0" stroke-width="1" fill="#a0a0a0"/><circle cx="683" cy="465.3" r="2.5" stroke="#a0a0a0" stroke-width="1" fill="#a0a0a0"/><circle cx="683" cy="490.6" r="2.5" stroke="#a0a0a0" stroke-width="1" fill="#a0a0a0"/><rect x="653.5" y="643.5" width="34.0" height="35.0" stroke="#30e0f0" stroke-width="1" fill="none" shape-rendering="crispEdges"/><circle cx="658" cy="648" r="2.5" stroke="#a0a0a0" stroke-width="1" fill="#a0a0a0"/><circle cx="658" cy="673" r="2.5" stroke="#a0a0a0" stroke-width="1" fill="#a0a0a0"/><circle cx="683" cy="648" r="2.5" stroke="#a0a0a0" stroke-width="1" fill="#a0a0a0"/><circle cx="683" cy="673" r="2.5" stroke="#a0a0a0" stroke-width="1" fill="#a0a0a0"/><line x1="549" y1="466" x2="549" y2="489" stroke="#1e78e6" stroke-width="2" shape-rendering="crispEdges"/><line x1="549" y1="649" x2="549" y2="672" stroke="#1e78e6" stroke-width="2" shape-rendering="crispEdges"/><line x1="541" y1="467" x2="557" y2="467" stroke="#1e78e6" stroke-width="2" shape-rendering="crispEdges"/><line x1="541" y1="489" x2="557" y2="489" stroke="#1e78e6" stroke-width="2" shape-rendering="crispEdges"/><line x1="541" y1="649" x2="557" y2="649" stroke="#1e78e6" stroke-width="2" shape-rendering="crispEdges"/><line x1="541" y1="672" x2="557" y2="672" stroke="#1e78e6" stroke-width="2" shape-rendering="crispEdges"/><line x1="628.5" y1="362" x2="628.5" y2="838" stroke="#000" stroke-width="1" shape-rendering="crispEdges"/><line x1="630.5" y1="362" x2="630.5" y2="838" stroke="#e010e0" stroke-width="1" shape-rendering="crispEdges"/><line x1="634" y1="447" x2="634" y2="789" stroke="#1e78e6" stroke-width="2" shape-rendering="crispEdges"/><line x1="709" y1="447" x2="709" y2="789" stroke="#1e78e6" stroke-width="2" shape-rendering="crispEdges"/><line x1="711.5" y1="362" x2="711.5" y2="838" stroke="#e010e0" stroke-width="1" shape-rendering="crispEdges"/><line x1="714" y1="362" x2="714" y2="851" stroke="#000" stroke-width="2" shape-rendering="crispEdges"/><path d="M633.8 443 A38 18 0 0 1 709 443" stroke="#1e78e6" stroke-width="1.8" fill="none"/><line x1="634" y1="444.5" x2="709" y2="444.5" stroke="#1e78e6" stroke-width="1" shape-rendering="crispEdges"/><line x1="634" y1="447.5" x2="709" y2="447.5" stroke="#1e78e6" stroke-width="1" shape-rendering="crispEdges"/><rect x="627.5" y="692.5" width="87.0" height="26.0" stroke="#1e78e6" stroke-width="1" fill="none" shape-rendering="crispEdges"/><line x1="627" y1="705" x2="714" y2="705" stroke="#1e78e6" stroke-width="2" shape-rendering="crispEdges"/><rect x="627.5" y="772.5" width="87.0" height="17.0" stroke="#1e78e6" stroke-width="1" fill="none" shape-rendering="crispEdges"/><line x1="627" y1="780.5" x2="714" y2="780.5" stroke="#1e78e6" stroke-width="1" shape-rendering="crispEdges"/><rect x="625" y="471" width="90" height="13" stroke="#a0a0a0" stroke-width="2" fill="none" shape-rendering="crispEdges"/><line x1="650" y1="471" x2="650" y2="484" stroke="#a0a0a0" stroke-width="2" shape-rendering="crispEdges"/><line x1="672" y1="471" x2="672" y2="484" stroke="#a0a0a0" stroke-width="2" shape-rendering="crispEdges"/><line x1="690" y1="471" x2="690" y2="484" stroke="#a0a0a0" stroke-width="2" shape-rendering="crispEdges"/><line x1="705" y1="471" x2="705" y2="484" stroke="#a0a0a0" stroke-width="2" shape-rendering="crispEdges"/><line x1="658" y1="471" x2="658" y2="484" stroke="#1e78e6" stroke-width="2" shape-rendering="crispEdges"/><line x1="684" y1="471" x2="684" y2="484" stroke="#30e0f0" stroke-width="2" shape-rendering="crispEdges"/><rect x="683" y="655" width="30" height="13" stroke="#a0a0a0" stroke-width="2" fill="none" shape-rendering="crispEdges"/><line x1="666.5" y1="356" x2="666.5" y2="452" stroke="#8010d0" stroke-width="1" shape-rendering="crispEdges"/><line x1="671.5" y1="356" x2="671.5" y2="452" stroke="#8010d0" stroke-width="1" shape-rendering="crispEdges"/><line x1="676" y1="356" x2="676" y2="452" stroke="#8010d0" stroke-width="2" shape-rendering="crispEdges"/><circle cx="671" cy="459.5" r="9" stroke="#c87820" stroke-width="1.5" fill="none"/><circle cx="671" cy="459.5" r="6" stroke="#8010d0" stroke-width="2" fill="none"/><circle cx="671" cy="459.5" r="2" stroke="#a0a0a0" stroke-width="1" fill="none"/><line x1="728.5" y1="362" x2="728.5" y2="745" stroke="#e05010" stroke-width="1" shape-rendering="crispEdges"/><line x1="733.5" y1="362" x2="733.5" y2="745" stroke="#e05010" stroke-width="1" shape-rendering="crispEdges"/><line x1="738.5" y1="362" x2="738.5" y2="748" stroke="#e05010" stroke-width="1" shape-rendering="crispEdges"/><rect x="729.5" y="445.5" width="9.0" height="45.0" stroke="#10a010" stroke-width="1" fill="none" shape-rendering="crispEdges"/><circle cx="733.5" cy="459" r="4.5" stroke="#e05010" stroke-width="1.5" fill="none"/><path d="M670 748 H730 Q738 748 738 740" stroke="#e05010" stroke-width="1.2" fill="none"/><line x1="670" y1="752.5" x2="735" y2="752.5" stroke="#e05010" stroke-width="1" shape-rendering="crispEdges"/><line x1="670" y1="756" x2="738" y2="756" stroke="#e05010" stroke-width="2" shape-rendering="crispEdges"/><circle cx="670" cy="752" r="8" stroke="#e05010" stroke-width="2" fill="#e05010"/><circle cx="670" cy="752" r="4" stroke="#fff" stroke-width="1" fill="#f7f7f7"/><line x1="656.5" y1="740" x2="656.5" y2="756" stroke="#c87820" stroke-width="1" shape-rendering="crispEdges"/><line x1="684.5" y1="740" x2="684.5" y2="756" stroke="#c87820" stroke-width="1" shape-rendering="crispEdges"/><line x1="518" y1="517" x2="602" y2="517" stroke="#8010d0" stroke-width="2" shape-rendering="crispEdges"/><line x1="518" y1="524" x2="600" y2="524" stroke="#8010d0" stroke-width="2" shape-rendering="crispEdges"/><line x1="518" y1="530.5" x2="602" y2="530.5" stroke="#8010d0" stroke-width="1" shape-rendering="crispEdges"/><rect x="581" y="511" width="7" height="25" stroke="#8010d0" stroke-width="2" fill="none" shape-rendering="crispEdges"/><circle cx="584.5" cy="523.5" r="1.5" stroke="#d4141e" stroke-width="1" fill="#d4141e"/><line x1="602" y1="523" x2="602" y2="660" stroke="#8010d0" stroke-width="2" shape-rendering="crispEdges"/><line x1="617" y1="523" x2="617" y2="660" stroke="#8010d0" stroke-width="2" shape-rendering="crispEdges"/><line x1="609.5" y1="531" x2="609.5" y2="652" stroke="#8010d0" stroke-width="1" shape-rendering="crispEdges"/><circle cx="609.5" cy="523.5" r="10" stroke="#8010d0" stroke-width="2.5" fill="none"/><circle cx="609.5" cy="661" r="10" stroke="#8010d0" stroke-width="2.5" fill="none"/><rect x="598" y="538" width="23" height="6" stroke="#8010d0" stroke-width="2" fill="#8010d0" shape-rendering="crispEdges"/><rect x="598" y="570" width="23" height="6" stroke="#8010d0" stroke-width="2" fill="#8010d0" shape-rendering="crispEdges"/><rect x="598" y="608" width="23" height="6" stroke="#8010d0" stroke-width="2" fill="#8010d0" shape-rendering="crispEdges"/><circle cx="609.5" cy="591" r="14" stroke="#8010d0" stroke-width="1.5" fill="none"/><circle cx="609.5" cy="591" r="10" stroke="#8010d0" stroke-width="1.2" fill="none"/><rect x="602" y="582" width="15" height="18" stroke="#8010d0" stroke-width="2" fill="none" shape-rendering="crispEdges"/><line x1="609" y1="451" x2="609" y2="500" stroke="#10a010" stroke-width="2" shape-rendering="crispEdges"/><line x1="596" y1="476.5" x2="622" y2="476.5" stroke="#10a010" stroke-width="3" shape-rendering="crispEdges"/><rect x="600.5" y="488.5" width="20.0" height="12.0" stroke="#10a010" stroke-width="1" fill="none" shape-rendering="crispEdges"/><rect x="600.5" y="500.5" width="21.0" height="8.0" stroke="#10a010" stroke-width="1" fill="none" shape-rendering="crispEdges"/><path d="M603 488 L606 470 H612 L616 488" stroke="#10a010" stroke-width="1.2" fill="none"/><rect x="600.5" y="668.5" width="20.0" height="14.0" stroke="#10a010" stroke-width="1" fill="none" shape-rendering="crispEdges"/><path d="M603 682 L606 700 H612 L616 682" stroke="#10a010" stroke-width="1.2" fill="none"/><line x1="609" y1="700" x2="609" y2="733" stroke="#10a010" stroke-width="2" shape-rendering="crispEdges"/><line x1="596" y1="708.5" x2="622" y2="708.5" stroke="#10a010" stroke-width="3" shape-rendering="crispEdges"/><line x1="619" y1="653.5" x2="662" y2="653.5" stroke="#8010d0" stroke-width="1" shape-rendering="crispEdges"/><line x1="619" y1="667.5" x2="662" y2="667.5" stroke="#8010d0" stroke-width="1" shape-rendering="crispEdges"/><line x1="619" y1="660.5" x2="662" y2="660.5" stroke="#8010d0" stroke-width="1" shape-rendering="crispEdges"/><circle cx="671.5" cy="661" r="10" stroke="#8010d0" stroke-width="2.5" fill="none"/><circle cx="671.5" cy="661" r="6" stroke="#8010d0" stroke-width="1.2" fill="none"/><line x1="812.5" y1="356" x2="812.5" y2="851" stroke="#ffff33" stroke-width="3" shape-rendering="crispEdges"/><line x1="810.5" y1="356" x2="810.5" y2="851" stroke="#10a010" stroke-width="1" shape-rendering="crispEdges"/><line x1="814.5" y1="356" x2="814.5" y2="851" stroke="#107020" stroke-width="1" shape-rendering="crispEdges"/><line x1="862" y1="353" x2="862" y2="851" stroke="#ffff33" stroke-width="4" shape-rendering="crispEdges"/><line x1="795" y1="431.5" x2="862" y2="431.5" stroke="#000" stroke-width="1" shape-rendering="crispEdges"/><rect x="795" y="428" width="18" height="5" stroke="#ffff33" stroke-width="2" fill="none" shape-rendering="crispEdges"/><line x1="814" y1="428.5" x2="860" y2="428.5" stroke="#107020" stroke-width="1" shape-rendering="crispEdges"/><line x1="814" y1="446" x2="860" y2="446" stroke="#107020" stroke-width="2" shape-rendering="crispEdges"/><line x1="814" y1="463.5" x2="860" y2="463.5" stroke="#107020" stroke-width="1" shape-rendering="crispEdges"/><line x1="814" y1="480.5" x2="860" y2="480.5" stroke="#107020" stroke-width="1" shape-rendering="crispEdges"/><line x1="814" y1="497.5" x2="860" y2="497.5" stroke="#107020" stroke-width="1" shape-rendering="crispEdges"/><line x1="814" y1="515.5" x2="860" y2="515.5" stroke="#107020" stroke-width="1" shape-rendering="crispEdges"/><line x1="814" y1="532.5" x2="860" y2="532.5" stroke="#107020" stroke-width="1" shape-rendering="crispEdges"/><line x1="814" y1="549.5" x2="860" y2="549.5" stroke="#107020" stroke-width="1" shape-rendering="crispEdges"/><line x1="814" y1="567.5" x2="860" y2="567.5" stroke="#107020" stroke-width="1" shape-rendering="crispEdges"/><line x1="814" y1="584.5" x2="860" y2="584.5" stroke="#107020" stroke-width="1" shape-rendering="crispEdges"/><line x1="814" y1="601.5" x2="860" y2="601.5" stroke="#107020" stroke-width="1" shape-rendering="crispEdges"/><line x1="814" y1="618.5" x2="860" y2="618.5" stroke="#107020" stroke-width="1" shape-rendering="crispEdges"/><line x1="814" y1="636.5" x2="860" y2="636.5" stroke="#107020" stroke-width="1" shape-rendering="crispEdges"/><line x1="814" y1="654" x2="860" y2="654" stroke="#107020" stroke-width="2" shape-rendering="crispEdges"/><line x1="814" y1="729" x2="860" y2="729" stroke="#107020" stroke-width="2" shape-rendering="crispEdges"/><line x1="814" y1="746" x2="860" y2="746" stroke="#107020" stroke-width="2" shape-rendering="crispEdges"/><line x1="814" y1="762" x2="860" y2="762" stroke="#107020" stroke-width="2" shape-rendering="crispEdges"/><line x1="814" y1="778" x2="860" y2="778" stroke="#107020" stroke-width="2" shape-rendering="crispEdges"/><line x1="814" y1="794" x2="860" y2="794" stroke="#107020" stroke-width="2" shape-rendering="crispEdges"/><line x1="814" y1="810" x2="860" y2="810" stroke="#107020" stroke-width="2" shape-rendering="crispEdges"/><line x1="814" y1="826" x2="860" y2="826" stroke="#107020" stroke-width="2" shape-rendering="crispEdges"/><line x1="814" y1="842.5" x2="860" y2="842.5" stroke="#107020" stroke-width="3" shape-rendering="crispEdges"/><clipPath id="fr1"><rect x="518" y="350" width="352" height="501"/></clipPath><g clip-path="url(#fr1)"><circle cx="848.3" cy="355" r="19" stroke="#a0a0a0" stroke-width="0.9" fill="none"/><text x="848" y="363" text-anchor="middle" font-size="20" fill="none" stroke="#a8a8a8" stroke-width="0.6" font-family="Liberation Sans">4</text><circle cx="848.3" cy="477.8" r="19" stroke="#a0a0a0" stroke-width="0.9" fill="none"/><text x="848" y="485.8" text-anchor="middle" font-size="20" fill="none" stroke="#a8a8a8" stroke-width="0.6" font-family="Liberation Sans">3</text><circle cx="848.3" cy="660" r="19" stroke="#a0a0a0" stroke-width="0.9" fill="none"/><text x="848" y="668" text-anchor="middle" font-size="20" fill="none" stroke="#a8a8a8" stroke-width="0.6" font-family="Liberation Sans">2</text><circle cx="848.3" cy="842" r="19" stroke="#a0a0a0" stroke-width="0.9" fill="none"/><text x="848" y="850" text-anchor="middle" font-size="20" fill="none" stroke="#a8a8a8" stroke-width="0.6" font-family="Liberation Sans">1</text></g><rect x="518.5" y="350.5" width="351.0" height="501.0" stroke="#000" stroke-width="1" fill="none" shape-rendering="crispEdges"/><line x1="590.5" y1="832" x2="590.5" y2="891" stroke="#40a070" stroke-width="1" shape-rendering="crispEdges"/><line x1="634" y1="891.5" x2="664" y2="891.5" stroke="#000" stroke-width="1" shape-rendering="crispEdges"/><line x1="590" y1="831.5" x2="626" y2="831.5" stroke="#e08080" stroke-width="1" shape-rendering="crispEdges"/><line x1="634.5" y1="838" x2="634.5" y2="890" stroke="#40a070" stroke-width="1" shape-rendering="crispEdges"/><line x1="590.5" y1="818" x2="590.5" y2="832" stroke="#000" stroke-width="1" shape-rendering="crispEdges"/><path d="M586 796 L590.7 803 L596 796 M590.7 803 V810" stroke="#30a890" stroke-width="1" fill="none"/><path d="M601 868 L605 883 L609 871 L613 883 L617 868" stroke="#111" stroke-width="1.4" fill="none"/><path d="M673 883 L685 897.5 M685 883 L673 897.5" stroke="#e07878" stroke-width="1" fill="none"/><line x1="590" y1="891.5" x2="634" y2="891.5" stroke="#e08080" stroke-width="1" shape-rendering="crispEdges"/><path d="M626 832 l6 2 l-2 5 l-5-2z" stroke="#000" stroke-width="1" fill="none"/><line x1="1092" y1="844.5" x2="1590" y2="844.5" stroke="#a0a0a0" stroke-width="1" shape-rendering="crispEdges"/><line x1="1092" y1="509.5" x2="1590" y2="509.5" stroke="#d4141e" stroke-width="3" shape-rendering="crispEdges"/><line x1="1092" y1="528" x2="1590" y2="528" stroke="#000" stroke-width="2" shape-rendering="crispEdges"/><line x1="1092" y1="530.5" x2="1590" y2="530.5" stroke="#a0101a" stroke-width="1" shape-rendering="crispEdges"/><line x1="1093" y1="443" x2="1590" y2="443" stroke="#ffff33" stroke-width="2" shape-rendering="crispEdges"/><line x1="1093" y1="447" x2="1590" y2="447" stroke="#ffff33" stroke-width="2" shape-rendering="crispEdges"/><line x1="1093" y1="455" x2="1590" y2="455" stroke="#ffff33" stroke-width="2" shape-rendering="crispEdges"/><line x1="1093" y1="458" x2="1590" y2="458" stroke="#ffff33" stroke-width="2" shape-rendering="crispEdges"/><line x1="1093" y1="486" x2="1590" y2="486" stroke="#ffff33" stroke-width="2" shape-rendering="crispEdges"/><line x1="1093" y1="503" x2="1590" y2="503" stroke="#ffff33" stroke-width="2" shape-rendering="crispEdges"/><line x1="1093" y1="473.5" x2="1590" y2="473.5" stroke="#ffff33" stroke-width="3" shape-rendering="crispEdges"/><line x1="1094" y1="444" x2="1094" y2="508" stroke="#ffff33" stroke-width="2" shape-rendering="crispEdges"/><line x1="1174" y1="444" x2="1174" y2="508" stroke="#ffff33" stroke-width="2" shape-rendering="crispEdges"/><line x1="1237" y1="444" x2="1237" y2="508" stroke="#ffff33" stroke-width="2" shape-rendering="crispEdges"/><line x1="1320" y1="444" x2="1320" y2="508" stroke="#ffff33" stroke-width="2" shape-rendering="crispEdges"/><line x1="1348" y1="444" x2="1348" y2="508" stroke="#ffff33" stroke-width="2" shape-rendering="crispEdges"/><line x1="1384" y1="444" x2="1384" y2="508" stroke="#ffff33" stroke-width="2" shape-rendering="crispEdges"/><line x1="1421" y1="444" x2="1421" y2="508" stroke="#ffff33" stroke-width="2" shape-rendering="crispEdges"/><line x1="1468" y1="444" x2="1468" y2="508" stroke="#ffff33" stroke-width="2" shape-rendering="crispEdges"/><line x1="1506" y1="444" x2="1506" y2="508" stroke="#ffff33" stroke-width="2" shape-rendering="crispEdges"/><line x1="1555" y1="444" x2="1555" y2="508" stroke="#ffff33" stroke-width="2" shape-rendering="crispEdges"/><line x1="1589" y1="444" x2="1589" y2="508" stroke="#ffff33" stroke-width="2" shape-rendering="crispEdges"/><line x1="1185" y1="379" x2="1509" y2="379" stroke="#1e78e6" stroke-width="2" shape-rendering="crispEdges"/><line x1="1185" y1="454" x2="1509" y2="454" stroke="#1e78e6" stroke-width="2" shape-rendering="crispEdges"/><path d="M1185 379.5 Q1165 388 1167 417 Q1165 446 1185 454" stroke="#1e78e6" stroke-width="1.2" fill="none"/><line x1="1167" y1="417.5" x2="1185" y2="417.5" stroke="#1e78e6" stroke-width="1" shape-rendering="crispEdges"/><rect x="1196.5" y="368.5" width="8.0" height="12.0" stroke="#a0a0a0" stroke-width="1" fill="none" shape-rendering="crispEdges"/><line x1="1193" y1="368" x2="1207" y2="368" stroke="#a0a0a0" stroke-width="2" shape-rendering="crispEdges"/><line x1="1185.5" y1="379" x2="1185.5" y2="454" stroke="#1e78e6" stroke-width="1" shape-rendering="crispEdges"/><line x1="1190.5" y1="379" x2="1190.5" y2="454" stroke="#1e78e6" stroke-width="1" shape-rendering="crispEdges"/><rect x="1432.5" y="372.5" width="30.0" height="88.0" stroke="#1e78e6" stroke-width="1" fill="none" shape-rendering="crispEdges"/><line x1="1440.5" y1="373" x2="1440.5" y2="460" stroke="#1e78e6" stroke-width="1" shape-rendering="crispEdges"/><line x1="1450" y1="373" x2="1450" y2="460" stroke="#1e78e6" stroke-width="2" shape-rendering="crispEdges"/><line x1="1457.5" y1="373" x2="1457.5" y2="460" stroke="#1e78e6" stroke-width="1" shape-rendering="crispEdges"/><rect x="1508.5" y="372.5" width="23.0" height="88.0" stroke="#1e78e6" stroke-width="1" fill="none" shape-rendering="crispEdges"/><line x1="1514.5" y1="373" x2="1514.5" y2="460" stroke="#1e78e6" stroke-width="1" shape-rendering="crispEdges"/><line x1="1521.5" y1="373" x2="1521.5" y2="460" stroke="#1e78e6" stroke-width="1" shape-rendering="crispEdges"/><line x1="1208" y1="312" x2="1208" y2="845" stroke="#1e78e6" stroke-width="2" shape-rendering="crispEdges"/><line x1="1230" y1="312" x2="1230" y2="845" stroke="#1e78e6" stroke-width="2" shape-rendering="crispEdges"/><line x1="1219.5" y1="312" x2="1219.5" y2="845" stroke="#e010e0" stroke-width="1" shape-rendering="crispEdges"/><line x1="1225.5" y1="312" x2="1225.5" y2="845" stroke="#e010e0" stroke-width="1" shape-rendering="crispEdges"/><line x1="1208" y1="312" x2="1230" y2="312" stroke="#1e78e6" stroke-width="2" shape-rendering="crispEdges"/><line x1="1211.5" y1="312" x2="1211.5" y2="845" stroke="#30e0f0" stroke-width="1" shape-rendering="crispEdges"/><line x1="1392" y1="312" x2="1392" y2="845" stroke="#1e78e6" stroke-width="2" shape-rendering="crispEdges"/><line x1="1413" y1="312" x2="1413" y2="845" stroke="#1e78e6" stroke-width="2" shape-rendering="crispEdges"/><line x1="1403.5" y1="312" x2="1403.5" y2="845" stroke="#e010e0" stroke-width="1" shape-rendering="crispEdges"/><line x1="1409.5" y1="312" x2="1409.5" y2="845" stroke="#e010e0" stroke-width="1" shape-rendering="crispEdges"/><line x1="1392" y1="312" x2="1413" y2="312" stroke="#1e78e6" stroke-width="2" shape-rendering="crispEdges"/><line x1="1394.5" y1="312" x2="1394.5" y2="845" stroke="#30e0f0" stroke-width="1" shape-rendering="crispEdges"/><line x1="1097" y1="508" x2="1097" y2="845" stroke="#e010e0" stroke-width="2" shape-rendering="crispEdges"/><line x1="1107" y1="508" x2="1107" y2="845" stroke="#1e78e6" stroke-width="2" shape-rendering="crispEdges"/><line x1="1091.5" y1="508" x2="1091.5" y2="845" stroke="#30e0f0" stroke-width="1" shape-rendering="crispEdges"/><line x1="1576" y1="508" x2="1576" y2="845" stroke="#1e78e6" stroke-width="2" shape-rendering="crispEdges"/><line x1="1585" y1="508" x2="1585" y2="845" stroke="#e010e0" stroke-width="2" shape-rendering="crispEdges"/><line x1="1591.5" y1="508" x2="1591.5" y2="845" stroke="#30e0f0" stroke-width="1" shape-rendering="crispEdges"/><line x1="1230" y1="314" x2="1392" y2="314" stroke="#d4141e" stroke-width="2" shape-rendering="crispEdges"/><line x1="1230" y1="322.5" x2="1392" y2="322.5" stroke="#d4141e" stroke-width="1" shape-rendering="crispEdges"/><line x1="1258" y1="316" x2="1258" y2="432" stroke="#8010d0" stroke-width="2" shape-rendering="crispEdges"/><line x1="1272" y1="316" x2="1272" y2="432" stroke="#8010d0" stroke-width="2" shape-rendering="crispEdges"/><line x1="1265.5" y1="320" x2="1265.5" y2="432" stroke="#8010d0" stroke-width="1" shape-rendering="crispEdges"/><circle cx="1265" cy="305" r="11" stroke="#8010d0" stroke-width="1.5" fill="none"/><circle cx="1265" cy="305" r="7" stroke="#8010d0" stroke-width="1" fill="none"/><circle cx="1274.0" cy="305.0" r="1" stroke="#8010d0" stroke-width="1" fill="#8010d0"/><circle cx="1271.4" cy="311.4" r="1" stroke="#8010d0" stroke-width="1" fill="#8010d0"/><circle cx="1265.0" cy="314.0" r="1" stroke="#8010d0" stroke-width="1" fill="#8010d0"/><circle cx="1258.6" cy="311.4" r="1" stroke="#8010d0" stroke-width="1" fill="#8010d0"/><circle cx="1256.0" cy="305.0" r="1" stroke="#8010d0" stroke-width="1" fill="#8010d0"/><circle cx="1258.6" cy="298.6" r="1" stroke="#8010d0" stroke-width="1" fill="#8010d0"/><circle cx="1265.0" cy="296.0" r="1" stroke="#8010d0" stroke-width="1" fill="#8010d0"/><circle cx="1271.4" cy="298.6" r="1" stroke="#8010d0" stroke-width="1" fill="#8010d0"/><line x1="1316" y1="387.5" x2="1392" y2="387.5" stroke="#8010d0" stroke-width="3" shape-rendering="crispEdges"/><line x1="1300" y1="395.5" x2="1392" y2="395.5" stroke="#8010d0" stroke-width="1" shape-rendering="crispEdges"/><line x1="1270" y1="401.5" x2="1392" y2="401.5" stroke="#8010d0" stroke-width="1" shape-rendering="crispEdges"/><line x1="1270" y1="384.5" x2="1282" y2="384.5" stroke="#8010d0" stroke-width="1" shape-rendering="crispEdges"/><rect x="1280.5" y="382.5" width="4.0" height="22.0" stroke="#8010d0" stroke-width="1" fill="#8010d0" shape-rendering="crispEdges"/><rect x="1311.5" y="382.5" width="4.0" height="22.0" stroke="#8010d0" stroke-width="1" fill="#8010d0" shape-rendering="crispEdges"/><circle cx="1297" cy="394" r="7" stroke="#8010d0" stroke-width="1.1" fill="none"/><circle cx="1287" cy="394" r="4.5" stroke="#8010d0" stroke-width="1" fill="none"/><circle cx="1307" cy="394" r="4.5" stroke="#8010d0" stroke-width="1" fill="none"/><path d="M1271 394 L1280 386 M1271 394 L1280 402" stroke="#8010d0" stroke-width="1" fill="none"/><path d="M1396 394 L1404 386 M1396 394 L1404 402" stroke="#8010d0" stroke-width="1" fill="none"/><line x1="1396" y1="340" x2="1396" y2="432" stroke="#8010d0" stroke-width="2" shape-rendering="crispEdges"/><line x1="1410" y1="340" x2="1410" y2="432" stroke="#8010d0" stroke-width="2" shape-rendering="crispEdges"/><circle cx="1403" cy="346" r="7" stroke="#8010d0" stroke-width="1.5" fill="none"/><rect x="1394.5" y="366.5" width="18.0" height="6.0" stroke="#8010d0" stroke-width="1" fill="none" shape-rendering="crispEdges"/><path d="M1258 455 Q1258 481 1284 481 H1384 Q1410 481 1410 455" stroke="#8010d0" stroke-width="1.8" fill="none"/><path d="M1271 455 Q1271 468 1284 468 H1384 Q1396 468 1396 455" stroke="#8010d0" stroke-width="1.2" fill="none"/><line x1="1258" y1="432" x2="1258" y2="455" stroke="#8010d0" stroke-width="2" shape-rendering="crispEdges"/><line x1="1272" y1="432" x2="1272" y2="455" stroke="#8010d0" stroke-width="2" shape-rendering="crispEdges"/><line x1="1396" y1="432" x2="1396" y2="455" stroke="#8010d0" stroke-width="2" shape-rendering="crispEdges"/><line x1="1410" y1="432" x2="1410" y2="455" stroke="#8010d0" stroke-width="2" shape-rendering="crispEdges"/><line x1="1255" y1="431.5" x2="1276" y2="431.5" stroke="#10a010" stroke-width="3" shape-rendering="crispEdges"/><line x1="1255" y1="449.5" x2="1276" y2="449.5" stroke="#10a010" stroke-width="3" shape-rendering="crispEdges"/><rect x="1257.5" y="433.5" width="17.0" height="14.0" stroke="#10a010" stroke-width="1" fill="none" shape-rendering="crispEdges"/><line x1="1256" y1="427" x2="1275" y2="427" stroke="#8010d0" stroke-width="2" shape-rendering="crispEdges"/><line x1="1256" y1="453" x2="1275" y2="453" stroke="#8010d0" stroke-width="2" shape-rendering="crispEdges"/><line x1="1388" y1="431.5" x2="1414" y2="431.5" stroke="#10a010" stroke-width="3" shape-rendering="crispEdges"/><line x1="1388" y1="449.5" x2="1414" y2="449.5" stroke="#10a010" stroke-width="3" shape-rendering="crispEdges"/><rect x="1390.5" y="433.5" width="22.0" height="14.0" stroke="#10a010" stroke-width="1" fill="none" shape-rendering="crispEdges"/><line x1="1389" y1="427" x2="1413" y2="427" stroke="#8010d0" stroke-width="2" shape-rendering="crispEdges"/><line x1="1389" y1="453" x2="1413" y2="453" stroke="#8010d0" stroke-width="2" shape-rendering="crispEdges"/><rect x="1312" y="462" width="8" height="25" stroke="#8010d0" stroke-width="2" fill="none" shape-rendering="crispEdges"/><rect x="1348" y="462" width="8" height="25" stroke="#8010d0" stroke-width="2" fill="none" shape-rendering="crispEdges"/><ellipse cx="1333" cy="424" rx="14" ry="8" stroke="#8010d0" stroke-width="1.2" fill="none"/><line x1="1321" y1="420.5" x2="1345" y2="420.5" stroke="#8010d0" stroke-width="1" shape-rendering="crispEdges"/><line x1="1320" y1="428.5" x2="1346" y2="428.5" stroke="#8010d0" stroke-width="1" shape-rendering="crispEdges"/><line x1="1322" y1="432" x2="1344" y2="432" stroke="#8010d0" stroke-width="2" shape-rendering="crispEdges"/><rect x="1329.5" y="433.5" width="8.0" height="7.0" stroke="#8010d0" stroke-width="1" fill="none" shape-rendering="crispEdges"/><rect x="1326.5" y="440.5" width="15.0" height="14.0" stroke="#8010d0" stroke-width="1" fill="none" shape-rendering="crispEdges"/><line x1="1333.5" y1="440" x2="1333.5" y2="454" stroke="#8010d0" stroke-width="1" shape-rendering="crispEdges"/><rect x="1325.5" y="459.5" width="17.0" height="25.0" stroke="#8010d0" stroke-width="1" fill="none" shape-rendering="crispEdges"/><line x1="1323" y1="462" x2="1344" y2="462" stroke="#8010d0" stroke-width="2" shape-rendering="crispEdges"/><line x1="1270" y1="438.5" x2="1392" y2="438.5" stroke="#e05010" stroke-width="1" shape-rendering="crispEdges"/><line x1="1270" y1="448.5" x2="1392" y2="448.5" stroke="#e05010" stroke-width="1" shape-rendering="crispEdges"/><line x1="1192" y1="441" x2="1240" y2="441" stroke="#10a010" stroke-width="2" shape-rendering="crispEdges"/><line x1="1420" y1="441" x2="1480" y2="441" stroke="#10a010" stroke-width="2" shape-rendering="crispEdges"/><line x1="1446.5" y1="427" x2="1446.5" y2="462" stroke="#10a010" stroke-width="3" shape-rendering="crispEdges"/><rect x="1240.5" y="435.5" width="10.0" height="12.0" stroke="#10a010" stroke-width="1" fill="none" shape-rendering="crispEdges"/><line x1="1488.5" y1="345" x2="1488.5" y2="425" stroke="#e05010" stroke-width="1" shape-rendering="crispEdges"/><line x1="1500.5" y1="345" x2="1500.5" y2="425" stroke="#e05010" stroke-width="1" shape-rendering="crispEdges"/><path d="M1488 425 Q1488 438 1470 440 H1420" stroke="#e05010" stroke-width="1.2" fill="none"/><path d="M1500 425 Q1500 450 1470 450 H1420" stroke="#e05010" stroke-width="1.2" fill="none"/><circle cx="1494" cy="343" r="6" stroke="#e05010" stroke-width="1.5" fill="none"/><rect x="1483" y="362" width="22" height="8" stroke="#e05010" stroke-width="2" fill="#e05010" shape-rendering="crispEdges"/><rect x="1483" y="384" width="22" height="8" stroke="#e05010" stroke-width="2" fill="#e05010" shape-rendering="crispEdges"/><rect x="1485" y="461" width="18" height="7" stroke="#a0a0a0" stroke-width="2" fill="#a0a0a0" shape-rendering="crispEdges"/><rect x="1484" y="475" width="20" height="15" stroke="#c87820" stroke-width="2" fill="none" shape-rendering="crispEdges"/><path d="M1485 475 Q1470 480 1484 495" stroke="#c87820" stroke-width="1" fill="none"/><line x1="1196.5" y1="548" x2="1196.5" y2="672" stroke="#e05010" stroke-width="1" shape-rendering="crispEdges"/><line x1="1201.5" y1="548" x2="1201.5" y2="672" stroke="#e05010" stroke-width="1" shape-rendering="crispEdges"/><line x1="1205.5" y1="548" x2="1205.5" y2="672" stroke="#e05010" stroke-width="1" shape-rendering="crispEdges"/><path d="M1196 672 Q1196 681.5 1186 681.5 H1092" stroke="#e05010" stroke-width="1" fill="none"/><path d="M1201 672 Q1201 686.7 1186 686.7 H1092" stroke="#e05010" stroke-width="1" fill="none"/><path d="M1205.5 672 Q1205.5 692 1186 692 H1092" stroke="#e05010" stroke-width="1.2" fill="none"/><rect x="1190.5" y="684.5" width="42.0" height="8.0" stroke="#10a010" stroke-width="1" fill="none" shape-rendering="crispEdges"/><line x1="1103.5" y1="530" x2="1103.5" y2="845" stroke="#e05010" stroke-width="1" shape-rendering="crispEdges"/><line x1="1197.5" y1="443" x2="1197.5" y2="505" stroke="#e05010" stroke-width="1" shape-rendering="crispEdges"/><line x1="1204.5" y1="443" x2="1204.5" y2="505" stroke="#c87820" stroke-width="1" shape-rendering="crispEdges"/><path d="M1197 455 Q1197 441 1212 441" stroke="#e05010" stroke-width="1.5" fill="none"/><path d="M1204 455 Q1204 448 1212 448" stroke="#e05010" stroke-width="1" fill="none"/><rect x="1193.5" y="460.5" width="15.0" height="6.0" stroke="#a0a0a0" stroke-width="1" fill="#a0a0a0" shape-rendering="crispEdges"/><rect x="1193.5" y="474.5" width="15.0" height="8.0" stroke="#c87820" stroke-width="1" fill="#c87820" shape-rendering="crispEdges"/><rect x="1193.5" y="488.5" width="15.0" height="5.0" stroke="#8010d0" stroke-width="1" fill="#8010d0" shape-rendering="crispEdges"/><path d="M1194 474 Q1180 478 1186 488 Q1192 493 1200 492" stroke="#c87820" stroke-width="1" fill="none"/><line x1="1122" y1="559" x2="1188" y2="559" stroke="#8010d0" stroke-width="2" shape-rendering="crispEdges"/><line x1="1092" y1="564.5" x2="1188" y2="564.5" stroke="#8010d0" stroke-width="1" shape-rendering="crispEdges"/><line x1="1092" y1="568.5" x2="1188" y2="568.5" stroke="#8010d0" stroke-width="1" shape-rendering="crispEdges"/><line x1="1092" y1="569.5" x2="1130" y2="569.5" stroke="#8010d0" stroke-width="3" shape-rendering="crispEdges"/><path d="M1188 559 Q1196 559 1196 550" stroke="#8010d0" stroke-width="1.2" fill="none"/><path d="M1188 568.5 Q1205.5 568.5 1205.5 550" stroke="#8010d0" stroke-width="1.2" fill="none"/><line x1="1196" y1="500" x2="1196" y2="550" stroke="#8010d0" stroke-width="2" shape-rendering="crispEdges"/><line x1="1205.5" y1="500" x2="1205.5" y2="550" stroke="#8010d0" stroke-width="1" shape-rendering="crispEdges"/><line x1="1092" y1="520.5" x2="1172" y2="520.5" stroke="#107020" stroke-width="1" shape-rendering="crispEdges"/><path d="M1172 511 L1394 659" stroke="#107020" stroke-width="1.3" fill="none"/><path d="M1170 522 L1394 673" stroke="#107020" stroke-width="1.3" fill="none"/><path d="M1172 511 L1170 522" stroke="#107020" stroke-width="1" fill="none"/><path d="M1180.0 525.2 h15 v3 h-15 z" stroke="#107020" stroke-width="1.1" fill="none"/><path d="M1196.8 536.6 h15 v3 h-15 z" stroke="#107020" stroke-width="1.1" fill="none"/><path d="M1213.6 547.9 h15 v3 h-15 z" stroke="#107020" stroke-width="1.1" fill="none"/><path d="M1230.4 559.2 h15 v3 h-15 z" stroke="#107020" stroke-width="1.1" fill="none"/><path d="M1247.2 570.5 h15 v3 h-15 z" stroke="#107020" stroke-width="1.1" fill="none"/><path d="M1264.0 581.9 h15 v3 h-15 z" stroke="#107020" stroke-width="1.1" fill="none"/><path d="M1280.8 593.2 h15 v3 h-15 z" stroke="#107020" stroke-width="1.1" fill="none"/><path d="M1297.6 604.5 h15 v3 h-15 z" stroke="#107020" stroke-width="1.1" fill="none"/><path d="M1314.4 615.8 h15 v3 h-15 z" stroke="#107020" stroke-width="1.1" fill="none"/><path d="M1331.2 627.1 h15 v3 h-15 z" stroke="#107020" stroke-width="1.1" fill="none"/><path d="M1348.0 638.5 h15 v3 h-15 z" stroke="#107020" stroke-width="1.1" fill="none"/><path d="M1364.8 649.8 h15 v3 h-15 z" stroke="#107020" stroke-width="1.1" fill="none"/><path d="M1381.6 661.1 h15 v3 h-15 z" stroke="#107020" stroke-width="1.1" fill="none"/><line x1="1378" y1="662.5" x2="1476" y2="662.5" stroke="#107020" stroke-width="1" shape-rendering="crispEdges"/><line x1="1392" y1="674" x2="1471" y2="674" stroke="#107020" stroke-width="2" shape-rendering="crispEdges"/><path d="M1476 662 L1591 750" stroke="#107020" stroke-width="1.3" fill="none"/><path d="M1471 673.5 L1591 765" stroke="#107020" stroke-width="1.3" fill="none"/><path d="M1487.0 682.2 h15 v3 h-15 z" stroke="#107020" stroke-width="1.1" fill="none"/><path d="M1504.3 695.4 h15 v3 h-15 z" stroke="#107020" stroke-width="1.1" fill="none"/><path d="M1521.6 708.6 h15 v3 h-15 z" stroke="#107020" stroke-width="1.1" fill="none"/><path d="M1538.9 721.8 h15 v3 h-15 z" stroke="#107020" stroke-width="1.1" fill="none"/><path d="M1556.2 735.0 h15 v3 h-15 z" stroke="#107020" stroke-width="1.1" fill="none"/><path d="M1573.5 748.2 h15 v3 h-15 z" stroke="#107020" stroke-width="1.1" fill="none"/><path d="M1176 457 L1390 605" stroke="#ffff33" stroke-width="1.4" fill="none"/><path d="M1176 462 L1390 610" stroke="#ffff33" stroke-width="1.1" fill="none"/><path d="M1176 485.6 L1392 635.4" stroke="#ffff33" stroke-width="1.4" fill="none"/><path d="M1176 490.6 L1392 640.4" stroke="#ffff33" stroke-width="1.1" fill="none"/><line x1="1273" y1="523" x2="1273" y2="578" stroke="#ffff33" stroke-width="2" shape-rendering="crispEdges"/><line x1="1372" y1="592" x2="1372" y2="642" stroke="#ffff33" stroke-width="2" shape-rendering="crispEdges"/><line x1="1406" y1="608.5" x2="1476" y2="608.5" stroke="#ffff33" stroke-width="3" shape-rendering="crispEdges"/><line x1="1406" y1="638.5" x2="1476" y2="638.5" stroke="#ffff33" stroke-width="3" shape-rendering="crispEdges"/><line x1="1406.5" y1="608" x2="1406.5" y2="662" stroke="#ffff33" stroke-width="3" shape-rendering="crispEdges"/><line x1="1475.5" y1="608" x2="1475.5" y2="662" stroke="#ffff33" stroke-width="3" shape-rendering="crispEdges"/><path d="M1476 608 L1591 699" stroke="#ffff33" stroke-width="1.3" fill="none"/><path d="M1476 614 L1591 705" stroke="#ffff33" stroke-width="1.1" fill="none"/><path d="M1476 638 L1591 729" stroke="#ffff33" stroke-width="1.3" fill="none"/><path d="M1476 644 L1591 735" stroke="#ffff33" stroke-width="1.1" fill="none"/><line x1="1580" y1="690" x2="1580" y2="745" stroke="#ffff33" stroke-width="2" shape-rendering="crispEdges"/><line x1="1579.5" y1="508" x2="1579.5" y2="845" stroke="#e05010" stroke-width="1" shape-rendering="crispEdges"/><path d="M1232 822 L1390 530" stroke="#e05010" stroke-width="1.2" fill="none"/><path d="M1240 822 L1392 538" stroke="#e05010" stroke-width="1" fill="none"/><path d="M1228 515 L1392 822" stroke="#e010e0" stroke-width="1.2" fill="none"/><path d="M1235 520 L1390 810" stroke="#e05010" stroke-width="1" fill="none"/><line x1="1092" y1="691" x2="1112" y2="691" stroke="#d4141e" stroke-width="2" shape-rendering="crispEdges"/><line x1="1212" y1="691" x2="1225" y2="691" stroke="#d4141e" stroke-width="2" shape-rendering="crispEdges"/><line x1="1397" y1="680" x2="1410" y2="680" stroke="#d4141e" stroke-width="2" shape-rendering="crispEdges"/><line x1="1403.5" y1="680" x2="1403.5" y2="740" stroke="#c05040" stroke-width="3" shape-rendering="crispEdges"/><line x1="1091" y1="843.5" x2="1112" y2="843.5" stroke="#30e0f0" stroke-width="3" shape-rendering="crispEdges"/><line x1="1200" y1="843.5" x2="1236" y2="843.5" stroke="#30e0f0" stroke-width="3" shape-rendering="crispEdges"/><line x1="1385" y1="843.5" x2="1420" y2="843.5" stroke="#30e0f0" stroke-width="3" shape-rendering="crispEdges"/><line x1="1570" y1="843.5" x2="1591" y2="843.5" stroke="#30e0f0" stroke-width="3" shape-rendering="crispEdges"/><path d="M1110 844.8 V868.8 q-2.5 3 -5 0 V858.8" stroke="#a0a0a0" stroke-width="1.2" fill="none"/><path d="M1206 844.8 V868.8 q-2.5 3 -5 0 V858.8" stroke="#a0a0a0" stroke-width="1.2" fill="none"/><path d="M1234 844.8 V868.8 q-2.5 3 -5 0 V858.8" stroke="#a0a0a0" stroke-width="1.2" fill="none"/><path d="M1389 844.8 V868.8 q-2.5 3 -5 0 V858.8" stroke="#a0a0a0" stroke-width="1.2" fill="none"/><path d="M1416 844.8 V868.8 q-2.5 3 -5 0 V858.8" stroke="#a0a0a0" stroke-width="1.2" fill="none"/><path d="M1575 844.8 V868.8 q-2.5 3 -5 0 V858.8" stroke="#a0a0a0" stroke-width="1.2" fill="none"/><rect x="1090.5" y="229.5" width="501.0" height="644.0" stroke="#000" stroke-width="1" fill="none" shape-rendering="crispEdges"/><line x1="1513" y1="928.5" x2="1624" y2="928.5" stroke="#e08080" stroke-width="1" shape-rendering="crispEdges"/><line x1="1586.5" y1="855" x2="1586.5" y2="996" stroke="#30a070" stroke-width="1" shape-rendering="crispEdges"/><rect x="1582.5" y="924.5" width="8.0" height="8.0" stroke="#000" stroke-width="1" fill="none" shape-rendering="crispEdges"/></svg>
<div class="b" style="left:568px;top:971px;width:972px;height:19px;background:#707375;"></div>
<svg class="b" style="left:568px;top:971px" width="30" height="19"><path d="M6 2v2M6 6v2M6 10v2M6 14v2" stroke="#ddd" stroke-width="1.5"/><path d="M14 7v2M14 12v2" stroke="#ddd" stroke-width="1.8"/></svg>
<div class="t" style="left:594.34px;top:974.09px;font-size:12.3px;line-height:1;color:#c8c8c8;font-weight:normal;font-style:italic;font-family:'Liberation Mono',monospace;transform:scaleX(0.9658);transform-origin:0 0;">Enter command</div>
<svg class="b" style="left:1518px;top:975px" width="14" height="10"><path d="M2 8l5-6 5 6z" fill="#fff"/></svg>
<div class="b" style="left:486px;top:996px;width:1138px;height:18px;background:#2b2d31;"></div>
<div class="b" style="left:486px;top:996px;width:195px;height:17px;background:#1c1d20;"></div>
<div class="b" style="left:613px;top:996px;width:54px;height:17px;background:#2b2d31;"></div>
<div class="b" style="left:486px;top:1013px;width:1138px;height:1px;background:#75777b;"></div>
<svg class="b" style="left:486px;top:996px" width="200" height="17">
<path d="M3 4v9M12 4l-7 4.5 7 4.5z" fill="#fff" stroke="#fff" stroke-width="1"/>
<path d="M14 1v15M31 1v15M48 1v15M65 1v15M82 1v15" stroke="#3a3c40"/>
<path d="M28 4l-7 4.5 7 4.5z" fill="#fff"/>
<path d="M39 4l7 4.5-7 4.5z" fill="#fff"/>
<path d="M54 4l7 4.5-7 4.5zM62 4v9" fill="#fff" stroke="#fff" stroke-width="1"/>
<rect x="72" y="4" width="8" height="7" fill="none" stroke="#eee" stroke-width="1.1"/><path d="M74 6.5h4M74 8.5h4" stroke="#eee"/>
</svg>
<div class="t" style="left:576.43px;top:998.34px;font-size:12px;line-height:1;color:#eee;font-weight:normal;font-style:normal;transform:scaleX(0.9094);transform-origin:0 0;">Model</div>
<div class="t" style="left:616.20px;top:998.34px;font-size:12px;line-height:1;color:#fff;font-weight:bold;font-style:normal;transform:scaleX(1.0236);transform-origin:0 0;">Layout1</div>
<div class="t" style="left:669.02px;top:996.42px;font-size:12.5px;line-height:1;color:#eee;font-weight:normal;font-style:normal;transform:scaleX(1.0887);transform-origin:0 0;">+</div>
<div class="b" style="left:1624px;top:155px;width:336px;height:858px;background:#2d2f34;"></div>
<svg class="b" style="left:1779px;top:161px" width="20" height="4"><path d="M0 1.5h2M4 1.5h2M8 1.5h2M12 1.5h2M16 1.5h2" stroke="#eee" stroke-width="2"/></svg>
<div class="t" style="left:1642.19px;top:188.33px;font-size:12.6px;line-height:1;color:#f2f2f2;font-weight:bold;font-style:normal;transform:scaleX(0.9791);transform-origin:0 0;">Attachments</div>
<svg class="b" style="left:1636px;top:212px" width="270" height="32" fill="none" stroke="#d0d0d0" stroke-width="1.2">
<circle cx="13" cy="15" r="7"/><path d="M13 11v8M9 15h8"/>
<path d="M27 14h6l-3 3z" fill="#d0d0d0" stroke="none"/>
<path d="M44.5 13a6.5 6.5 0 0 1 11-3.5M57.5 17a6.5 6.5 0 0 1-11 3.5"/><path d="M52 7.5l4 2-2 4M50 22.5l-4-2 2-4"/>
<path d="M70 10h12M74 10v-2h4v2M71 10l1 12h8l1-12M75 13v7M78 13v7"/>
<path d="M97 12v10h10v-4M101 18l8-8M105 10h4v4"/>
<rect x="216" y="7" width="5" height="4" stroke="#888"/><rect x="222" y="14" width="5" height="4" stroke="#888"/><rect x="222" y="20" width="5" height="4" stroke="#888"/><path d="M218 11v11h4M218 16h4" stroke="#888"/>
</svg>
<div class="b" style="left:1870px;top:213px;width:28px;height:28px;background:#3d3f44;border-radius:3px"></div>
<svg class="b" style="left:1870px;top:213px" width="28" height="28" fill="none" stroke="#eee" stroke-width="1.3"><rect x="6" y="7" width="16" height="14" rx="2"/><path d="M6 12h16M6 16h16M14 12v9"/></svg>
<div class="b" style="left:1643px;top:251px;width:28px;height:24px;background:#1b1c1f;"></div>
<div class="b" style="left:1673px;top:251px;width:28px;height:24px;background:#1b1c1f;"></div>
<div class="b" style="left:1704px;top:251px;width:181px;height:24px;background:#1b1c1f;"></div>
<div class="b" style="left:1888px;top:251px;width:9px;height:24px;background:#1b1c1f;"></div>
<svg class="b" style="left:1643px;top:251px" width="60" height="24"><path d="M6 12c3-5 11-5 14 0-3 5-11 5-14 0z" fill="#e0e0e0"/><circle cx="13" cy="12" r="2.5" fill="#1b1c1f"/><path d="M39 5h6l3 3v11h-9z" fill="none" stroke="#ccc" stroke-width="1.2"/></svg>
<div class="t" style="left:1779.34px;top:256.84px;font-size:12px;line-height:1;color:#f0f0f0;font-weight:normal;font-style:normal;">Name</div>
<div class="b" style="left:1888px;top:251px;width:9px;height:24px;overflow:hidden"><div class="t" style="left:2px;top:6px;font-size:12px;line-height:1;color:#f0f0f0;font-weight:bold">R</div></div>
<div class="b" style="left:1653px;top:283px;width:6px;height:6px;border-radius:3px;background:#e6e6e6"></div>
<svg class="b" style="left:1680px;top:278px" width="16" height="16"><rect width="16" height="16" rx="2" fill="#4a8ef0"/><path d="M8 1v14M1 8h14" stroke="#fff" stroke-width="1.1"/><circle cx="8" cy="9" r="2.2" fill="none" stroke="#fff" stroke-width="1"/></svg>
<div class="t" style="left:1714.05px;top:279.84px;font-size:12px;line-height:1;color:#e8e8e8;font-weight:normal;font-style:normal;transform:scaleX(0.9195);transform-origin:0 0;">22_Piperack</div>
<div class="b" style="left:1653px;top:305px;width:6px;height:6px;border-radius:3px;background:#e6e6e6"></div>
<svg class="b" style="left:1680px;top:300px" width="16" height="16"><rect width="16" height="16" rx="2" fill="#4a8ef0"/><path d="M8 1v14M1 8h14" stroke="#fff" stroke-width="1.1"/><circle cx="8" cy="9" r="2.2" fill="none" stroke="#fff" stroke-width="1"/></svg>
<div class="t" style="left:1714.04px;top:301.24px;font-size:12px;line-height:1;color:#e8e8e8;font-weight:normal;font-style:normal;transform:scaleX(0.9334);transform-origin:0 0;">22_Piping</div>
<div class="b" style="left:1653px;top:326px;width:6px;height:6px;border-radius:3px;background:#e6e6e6"></div>
<svg class="b" style="left:1680px;top:321px" width="16" height="16"><rect width="16" height="16" rx="2" fill="#4a8ef0"/><path d="M8 1v14M1 8h14" stroke="#fff" stroke-width="1.1"/><circle cx="8" cy="9" r="2.2" fill="none" stroke="#fff" stroke-width="1"/></svg>
<div class="t" style="left:1714.07px;top:322.74px;font-size:12px;line-height:1;color:#e8e8e8;font-weight:normal;font-style:normal;transform:scaleX(0.8851);transform-origin:0 0;">22_PLOTPLAN</div>
<div class="b" style="left:1653px;top:348px;width:6px;height:6px;border-radius:3px;background:#e6e6e6"></div>
<svg class="b" style="left:1680px;top:343px" width="16" height="16"><rect width="16" height="16" rx="2" fill="#4a8ef0"/><path d="M8 1v14M1 8h14" stroke="#fff" stroke-width="1.1"/><circle cx="8" cy="9" r="2.2" fill="none" stroke="#fff" stroke-width="1"/></svg>
<div class="t" style="left:1714.03px;top:344.84px;font-size:12px;line-height:1;color:#e8e8e8;font-weight:normal;font-style:normal;transform:scaleX(0.9573);transform-origin:0 0;">22_Structure_Platforms</div>
<div class="b" style="left:1643px;top:747px;width:254px;height:6px;background:#3c3e43;border-radius:3px"></div>
<div class="b" style="left:1643px;top:747px;width:186px;height:6px;background:#a2a6ae;border-radius:3px"></div>
<div class="b" style="left:1626px;top:779px;width:286px;height:1px;background:#1b1c1f;"></div>
<div class="t" style="left:1652.45px;top:789.42px;font-size:12.5px;line-height:1;color:#f4f4f4;font-weight:bold;font-style:normal;transform:scaleX(0.9207);transform-origin:0 0;">Properties</div>
<div class="t" style="left:1812.02px;top:789.16px;font-size:12.8px;line-height:1;color:#f0f0f0;font-weight:normal;font-style:normal;transform:scaleX(0.9364);transform-origin:0 0;">0 selected</div>
<svg class="b" style="left:1881px;top:789px" width="14" height="10"><path d="M2 3l5 4 5-4" stroke="#eee" fill="none" stroke-width="1.3"/></svg>
<div class="t" style="left:1652.24px;top:821.84px;font-size:12px;line-height:1;color:#e8e8e8;font-weight:normal;font-style:normal;">Name</div>
<div class="t" style="left:1652.65px;top:847.84px;font-size:12px;line-height:1;color:#e8e8e8;font-weight:normal;font-style:normal;transform:scaleX(1.0103);transform-origin:0 0;">Status</div>
<div class="t" style="left:1652.65px;top:872.84px;font-size:12px;line-height:1;color:#e8e8e8;font-weight:normal;font-style:normal;transform:scaleX(1.0108);transform-origin:0 0;">Size</div>
<div class="t" style="left:1652.96px;top:898.54px;font-size:12px;line-height:1;color:#e8e8e8;font-weight:normal;font-style:normal;transform:scaleX(1.0079);transform-origin:0 0;">Type</div>
<div class="t" style="left:1652.27px;top:924.04px;font-size:12px;line-height:1;color:#e8e8e8;font-weight:normal;font-style:normal;transform:scaleX(0.9698);transform-origin:0 0;">Date</div>
<div class="t" style="left:1652.68px;top:949.84px;font-size:12px;line-height:1;color:#e8e8e8;font-weight:normal;font-style:normal;transform:scaleX(0.9651);transform-origin:0 0;">Saved Path</div>
<div class="t" style="left:1652.28px;top:975.54px;font-size:12px;line-height:1;color:#e8e8e8;font-weight:normal;font-style:normal;transform:scaleX(0.9619);transform-origin:0 0;">Found Path</div>
<svg class="b" style="left:1883px;top:900px" width="14" height="10"><path d="M2 3l5 4 5-4" stroke="#555" fill="none" stroke-width="1.2"/></svg>
<svg class="b" style="left:1876px;top:954px" width="16" height="5"><circle cx="2" cy="2" r="1.3" fill="#888"/><circle cx="7" cy="2" r="1.3" fill="#888"/><circle cx="12" cy="2" r="1.3" fill="#888"/></svg>
<div class="b" style="left:1913px;top:167px;width:47px;height:846px;background:#1b1c1f;"></div>
<div class="b" style="left:1913px;top:321px;width:47px;height:49px;background:#2d2f34;"></div>
<svg class="b" style="left:1913px;top:0px" width="47" height="600" fill="none" stroke="#eee" stroke-width="1.2">
<g transform="translate(24 191)"><path d="M-12 -8h24M-12 1h24M-12 9h24"/><circle cx="-6" cy="-8" r="3" fill="#1b1c1f"/><circle cx="6" cy="1" r="3" fill="#1b1c1f"/><circle cx="0" cy="9" r="3" fill="#1b1c1f"/></g>
<g transform="translate(24 243)"><path d="M-12 2l7-10h18l-7 10zM-10 4l-2 3h18l7-10M-10 8l-2 3h18l7-10"/></g>
<g transform="translate(24 294)"><rect x="-9" y="-12" width="7" height="7"/><rect x="3" y="-12" width="7" height="7"/><rect x="-9" y="1" width="7" height="7"/><rect x="3" y="1" width="7" height="7"/><path d="M-9 -2h7M3 -2h7M-9 11.5h7M3 11.5h7" stroke-width="1.5"/></g>
<g transform="translate(24 345)"><path d="M-4 8v-16a4 4 0 0 1 8 0v17a5 5 0 0 1-10 0v-14" stroke-width="1.3"/></g>
<g transform="translate(24 396)"><path d="M-11 6l9-13a4.5 4.5 0 0 1 7 4l-9 13a3.5 3.5 0 1 1-7-4zM-1 12h12v-18l-12 18M4 9h4v-6z"/></g>
<g transform="translate(24 447)"><path d="M-10 -3c0-6 5-10 10-10s10 4 10 10c0 5-5 9-7 11h-6c-2-2-7-6-7-11zM-4 -13c-3 4-3 15 1 21M4 -13c3 4 3 15-1 21M0 -13v21M-3 9h6v4h-6z"/></g>
<g transform="translate(24 498)"><path d="M-9 -12h18v12h-18zM-9 -4h18M-5 -9v5M0 -9v5M5 -9v5M-2 0v5a2.5 2.5 0 1 0 4 0v-5"/></g>
<g transform="translate(24 550)"><path d="M-8 8a6 6 0 0 1-1-12 8 8 0 0 1 16-1 6 6 0 0 1 1 13zM0 6v-8M-3 1l3-3 3 3"/></g>
</svg>
<div class="b" style="left:0px;top:1013px;width:486px;height:67px;background:#1a1b1e;"></div>
<div class="b" style="left:486px;top:1014px;width:1474px;height:66px;background:#1a1b1e;"></div>
<div class="t" style="left:-0.41px;top:1016.84px;font-size:12px;line-height:1;color:#e8e8e8;font-weight:normal;font-style:normal;transform:scaleX(0.9460);transform-origin:0 0;">Ready</div>
<div class="b" style="left:808px;top:1015px;width:1px;height:14px;background:#d8d8d8;"></div>
<div class="t" style="left:887.24px;top:1016.94px;font-size:12px;line-height:1;color:#eee;font-weight:normal;font-style:normal;transform:scaleX(0.9565);transform-origin:0 0;">1035.5170, 112.7056, 0.0000</div>
<div class="t" style="left:1045.34px;top:1016.94px;font-size:12px;line-height:1;color:#eee;font-weight:normal;font-style:normal;transform:scaleX(0.8466);transform-origin:0 0;">STANDARD</div>
<div class="t" style="left:1109.20px;top:1016.94px;font-size:12px;line-height:1;color:#eee;font-weight:normal;font-style:normal;transform:scaleX(0.9304);transform-origin:0 0;">Standard</div>
<div class="t" style="left:1163.55px;top:1016.94px;font-size:12px;line-height:1;color:#eee;font-weight:normal;font-style:normal;transform:scaleX(0.8866);transform-origin:0 0;">Modeling</div>
<div class="t" style="left:1219.27px;top:1016.94px;font-size:12px;line-height:1;color:#8a8a8a;font-weight:normal;font-style:normal;transform:scaleX(0.8000);transform-origin:0 0;">SNAP</div>
<div class="t" style="left:1257.30px;top:1016.94px;font-size:12px;line-height:1;color:#8a8a8a;font-weight:normal;font-style:normal;transform:scaleX(0.8385);transform-origin:0 0;">GRID</div>
<div class="t" style="left:1289.89px;top:1016.94px;font-size:12px;line-height:1;color:#8a8a8a;font-weight:normal;font-style:normal;transform:scaleX(0.8400);transform-origin:0 0;">HIDEOBJECTS</div>
<div class="t" style="left:1369.33px;top:1016.94px;font-size:12px;line-height:1;color:#8a8a8a;font-weight:normal;font-style:normal;transform:scaleX(0.8619);transform-origin:0 0;">ORTHO</div>
<div class="t" style="left:1414.99px;top:1016.94px;font-size:12px;line-height:1;color:#8a8a8a;font-weight:normal;font-style:normal;transform:scaleX(0.8397);transform-origin:0 0;">POLAR</div>
<div class="b" style="left:1457.8px;top:1016.3px;width:34.90000000000009px;height:12.2px;background:#47494e;"></div>
<div class="t" style="left:1458.21px;top:1016.94px;font-size:12px;line-height:1;color:#f4f4f4;font-weight:normal;font-style:normal;transform:scaleX(0.8180);transform-origin:0 0;">ESNAP</div>
<div class="b" style="left:1500px;top:1016.3px;width:41.799999999999955px;height:12.2px;background:#47494e;"></div>
<div class="t" style="left:1500.55px;top:1016.94px;font-size:12px;line-height:1;color:#f4f4f4;font-weight:normal;font-style:normal;transform:scaleX(0.8333);transform-origin:0 0;">STRACK</div>
<div class="t" style="left:1548.67px;top:1016.94px;font-size:12px;line-height:1;color:#7a7a7a;font-weight:normal;font-style:normal;transform:scaleX(0.8613);transform-origin:0 0;">LWT</div>
<div class="t" style="left:1580.10px;top:1016.94px;font-size:12px;line-height:1;color:#eee;font-weight:normal;font-style:normal;transform:scaleX(0.9410);transform-origin:0 0;">P:Layout1</div>
<div class="t" style="left:1639.61px;top:1016.94px;font-size:12px;line-height:1;color:#7a7a7a;font-weight:normal;font-style:normal;transform:scaleX(0.9908);transform-origin:0 0;">1:1</div>
<div class="t" style="left:1664.22px;top:1016.94px;font-size:12px;line-height:1;color:#8a8a8a;font-weight:normal;font-style:normal;transform:scaleX(0.8164);transform-origin:0 0;">DUCS</div>
<div class="b" style="left:1700.2px;top:1016.3px;width:22.799999999999955px;height:12.2px;background:#47494e;"></div>
<div class="t" style="left:1700.14px;top:1016.94px;font-size:12px;line-height:1;color:#f4f4f4;font-weight:normal;font-style:normal;transform:scaleX(0.8974);transform-origin:0 0;">DYN</div>
<div class="t" style="left:1730.33px;top:1016.94px;font-size:12px;line-height:1;color:#8a8a8a;font-weight:normal;font-style:normal;transform:scaleX(0.8706);transform-origin:0 0;">QUAD</div>
<div class="t" style="left:1768.81px;top:1016.94px;font-size:12px;line-height:1;color:#8a8a8a;font-weight:normal;font-style:normal;transform:scaleX(0.8230);transform-origin:0 0;">RT</div>
<div class="b" style="left:1791.3px;top:1016.3px;width:22.299999999999955px;height:12.2px;background:#47494e;"></div>
<div class="t" style="left:1791.19px;top:1016.94px;font-size:12px;line-height:1;color:#f4f4f4;font-weight:normal;font-style:normal;transform:scaleX(0.8439);transform-origin:0 0;">HKA</div>
<div class="t" style="left:1820.55px;top:1016.94px;font-size:12px;line-height:1;color:#7a7a7a;font-weight:normal;font-style:normal;transform:scaleX(0.8873);transform-origin:0 0;">LOCKUI</div>
<div class="t" style="left:1867.61px;top:1016.94px;font-size:12px;line-height:1;color:#eee;font-weight:normal;font-style:normal;transform:scaleX(0.9272);transform-origin:0 0;">None</div>
<div class="b" style="left:1042.5px;top:1016px;width:1px;height:14px;background:#d8d8d8;"></div>
<div class="b" style="left:1106px;top:1016px;width:1px;height:14px;background:#d8d8d8;"></div>
<div class="b" style="left:1160.5px;top:1016px;width:1px;height:14px;background:#d8d8d8;"></div>
<div class="b" style="left:1213.5px;top:1016px;width:1px;height:14px;background:#d8d8d8;"></div>
<div class="b" style="left:1250.7px;top:1016px;width:1px;height:14px;background:#d8d8d8;"></div>
<div class="b" style="left:1287.2px;top:1016px;width:1px;height:14px;background:#d8d8d8;"></div>
<div class="b" style="left:1366.3px;top:1016px;width:1px;height:14px;background:#d8d8d8;"></div>
<div class="b" style="left:1412.5px;top:1016px;width:1px;height:14px;background:#d8d8d8;"></div>
<div class="b" style="left:1455.1px;top:1016px;width:1px;height:14px;background:#d8d8d8;"></div>
<div class="b" style="left:1497.2px;top:1016px;width:1px;height:14px;background:#d8d8d8;"></div>
<div class="b" style="left:1546.2px;top:1016px;width:1px;height:14px;background:#d8d8d8;"></div>
<div class="b" style="left:1577.3px;top:1016px;width:1px;height:14px;background:#d8d8d8;"></div>
<div class="b" style="left:1636.2px;top:1016px;width:1px;height:14px;background:#d8d8d8;"></div>
<div class="b" style="left:1660.5px;top:1016px;width:1px;height:14px;background:#d8d8d8;"></div>
<div class="b" style="left:1697.3px;top:1016px;width:1px;height:14px;background:#d8d8d8;"></div>
<div class="b" style="left:1727.3px;top:1016px;width:1px;height:14px;background:#d8d8d8;"></div>
<div class="b" style="left:1766px;top:1016px;width:1px;height:14px;background:#d8d8d8;"></div>
<div class="b" style="left:1788.4px;top:1016px;width:1px;height:14px;background:#d8d8d8;"></div>
<div class="b" style="left:1818px;top:1016px;width:1px;height:14px;background:#d8d8d8;"></div>
<div class="b" style="left:1865.4px;top:1016px;width:1px;height:14px;background:#d8d8d8;"></div>
<div class="b" style="left:1900.3px;top:1016px;width:1px;height:14px;background:#d8d8d8;"></div>
<svg class="b" style="left:1903px;top:1020px" width="12" height="8"><path d="M1 2h8l-4 5z" fill="#eee"/></svg>
<svg class="b" style="left:1949px;top:1022px" width="10" height="10"><path d="M8 1h1M5 4h1M8 4h1M2 7h1M5 7h1M8 7h1" stroke="#aaa" stroke-width="1.2"/></svg>
</body></html>
